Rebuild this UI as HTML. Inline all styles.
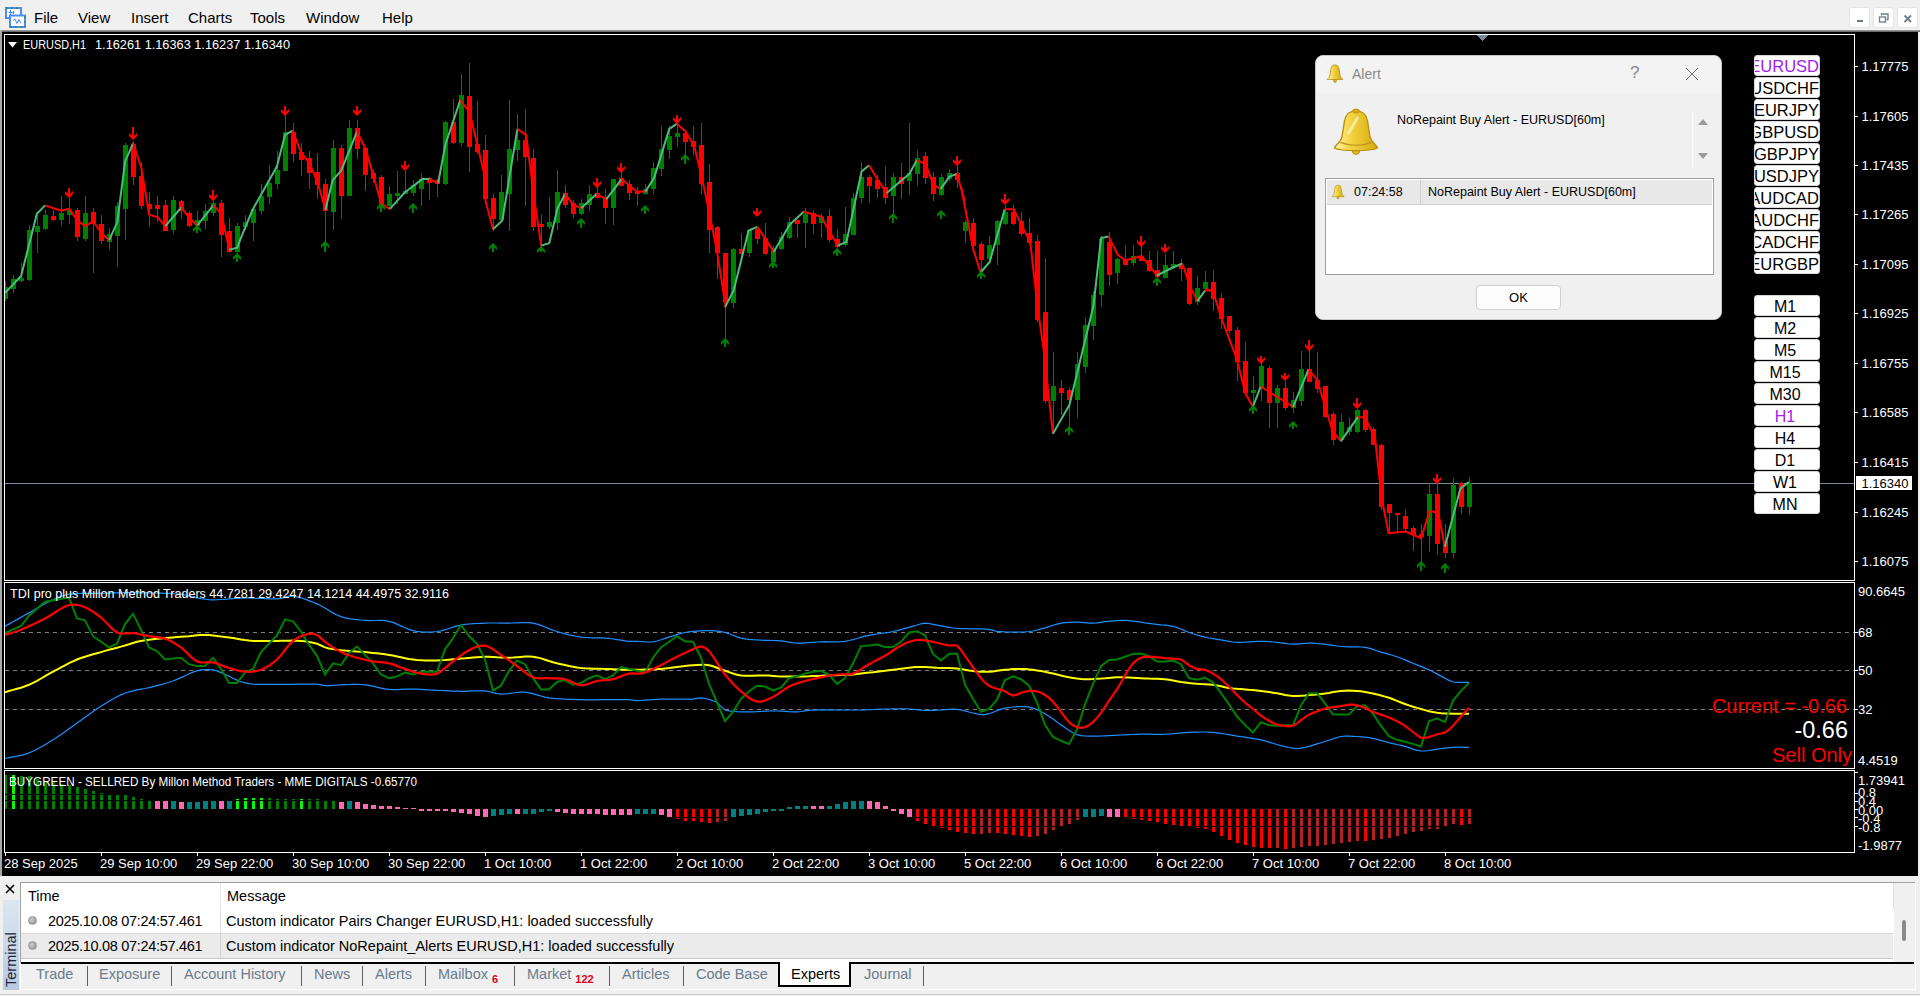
<!DOCTYPE html>
<html><head><meta charset="utf-8">
<style>
*{margin:0;padding:0;box-sizing:border-box}
html,body{width:1920px;height:996px;overflow:hidden;background:#f0f0f0;font-family:"Liberation Sans",sans-serif}
.abs{position:absolute}
#menubar{position:absolute;left:0;top:0;width:1920px;height:30px;background:#f0f0f0}
.mi{position:absolute;top:9px;font-size:15px;color:#000}
#shade{position:absolute;left:0;top:30px;width:1920px;height:2px;background:linear-gradient(#a8a8a8,#5a5a5a)}
#leftshade{position:absolute;left:0;top:30px;width:2px;height:848px;background:#a8a8a8}
#chartbg{position:absolute;left:2px;top:32px;width:1916px;height:844px;background:#000}
svg.main{position:absolute;left:0;top:0}
svg text{font-family:"Liberation Sans",sans-serif;font-size:12px;fill:#fff}
svg text.ax{font-size:13px}
svg text.tl{letter-spacing:0px}
.wbtn{position:absolute;top:7px;width:21px;height:21px;background:#fff;border:1px solid #e6e6e6;border-radius:3px}
.pbtn{position:absolute;left:1754px;width:66px;height:21px;background:#fff;border:1px solid #d8d8d8;border-radius:3px;overflow:hidden;text-align:center;white-space:nowrap}
.pbtn span{position:absolute;right:0px;top:1px;font-size:16.5px;color:#000;line-height:19px}
.pbtn.tf span{right:auto;left:50%;transform:translateX(-50%);margin-left:-2px}
.pbtn.tf span{font-size:16px}
.pbtn.sel span{color:#a020f0}
#dlg{position:absolute;left:1315px;top:55px;width:407px;height:265px;background:#f0f0f0;border-radius:8px;overflow:hidden;border:1px solid #c8c8c8}
#dlgtitle{position:absolute;left:0;top:0;width:100%;height:37px;background:#f3f3f3}
#term{position:absolute;left:0;top:876px;width:1920px;height:120px;background:#f0f0f0}
.tab{position:absolute;top:966px;font-size:14.5px;color:#6b7a8c;height:20px}
.tab.act{color:#000}
.tsep{position:absolute;top:966px;width:1px;height:20px;background:#5f5f5f}
.badge{color:#e0001a;font-size:11px;font-weight:bold;margin-left:4px;position:relative;top:4px}
</style></head><body>
<div id="menubar">
 <svg class="abs" style="left:5px;top:7px" width="21" height="21" viewBox="0 0 21 21">
  <rect x="1" y="1" width="15" height="10" fill="#fff" stroke="#4a8cff" stroke-width="2"/>
  <path d="M1 1 H16" stroke="#3a8a70" stroke-width="2" stroke-dasharray="2,3"/>
  <rect x="5" y="8.5" width="15" height="11.5" fill="#fff" stroke="#4a8cff" stroke-width="2"/>
  <path d="M5 20 H20 M20 9 V20" stroke="#3a8a70" stroke-width="2" stroke-dasharray="2,3"/>
  <path d="M3.5 5.5 H8.5 M5.5 3 V8 M8.5 4 V7" stroke="#4a8cff" stroke-width="1"/>
  <path d="M8 13.5 L10 12 L12 16.5 L14 12.5 L16 16.5" stroke="#4a8cff" stroke-width="1" fill="none"/>
 </svg>
 <div class="mi" style="left:34px">File</div>
 <div class="mi" style="left:78px">View</div>
 <div class="mi" style="left:131px">Insert</div>
 <div class="mi" style="left:188px">Charts</div>
 <div class="mi" style="left:250px">Tools</div>
 <div class="mi" style="left:306px">Window</div>
 <div class="mi" style="left:382px">Help</div>
 <div class="wbtn" style="left:1849px"><div class="abs" style="left:7px;top:12px;width:6px;height:2px;background:#6b7b8c"></div></div>
 <div class="wbtn" style="left:1873px"><svg class="abs" style="left:4px;top:4px" width="12" height="12"><rect x="1.5" y="5" width="6" height="5" fill="none" stroke="#6b7b8c" stroke-width="1.3"/><path d="M3.5 3.5 V2 H10 V7.5 H8.5" fill="none" stroke="#6b7b8c" stroke-width="1.3"/></svg></div>
 <div class="wbtn" style="left:1897px"><svg class="abs" style="left:5px;top:6px" width="10" height="10"><path d="M1.5 1.5 L8 8 M8 1.5 L1.5 8" stroke="#6b7b8c" stroke-width="1.8"/></svg></div>
</div>
<div id="shade"></div>
<div id="leftshade"></div>
<div id="chartbg"></div>
<svg class="main" width="1920" height="996" shape-rendering="crispEdges">
<defs>
 <clipPath id="clipMain"><rect x="5" y="35" width="1849" height="545"/></clipPath>
 <clipPath id="clipTDI"><rect x="5" y="583" width="1849" height="185"/></clipPath>
 <clipPath id="clipHist"><rect x="5" y="771" width="1849" height="81"/></clipPath>
</defs>
<!-- frames -->
<rect x="4.5" y="34.5" width="1850" height="546" fill="none" stroke="#fff" stroke-width="1"/>
<rect x="4.5" y="582.5" width="1850" height="186" fill="none" stroke="#fff" stroke-width="1"/>
<rect x="4.5" y="770.5" width="1850" height="82" fill="none" stroke="#fff" stroke-width="1"/>
<path d="M1476 35 L1489 35 L1482.5 41 Z" fill="#778899"/>
<g shape-rendering="auto">
<g clip-path="url(#clipMain)">
<rect x="5" y="483" width="1849" height="1" fill="#778899"/>
<rect x="5" y="281" width="1" height="20" fill="#008000"/>
<rect x="3" y="287" width="5" height="12" fill="#008000"/>
<rect x="13" y="275" width="1" height="18" fill="#008000"/>
<rect x="11" y="279" width="5" height="10" fill="#008000"/>
<rect x="21" y="263" width="1" height="19" fill="#008000"/>
<rect x="19" y="278" width="5" height="3" fill="#008000"/>
<rect x="29" y="225" width="1" height="56" fill="#008000"/>
<rect x="27" y="230" width="5" height="50" fill="#008000"/>
<rect x="37" y="215" width="1" height="38" fill="#008000"/>
<rect x="35" y="226" width="5" height="6" fill="#008000"/>
<rect x="45" y="210" width="1" height="20" fill="#008000"/>
<rect x="43" y="215" width="5" height="14" fill="#008000"/>
<rect x="53" y="210" width="1" height="11" fill="#ff0000"/>
<rect x="51" y="216" width="5" height="4" fill="#ff0000"/>
<rect x="61" y="196" width="1" height="30" fill="#008000"/>
<rect x="59" y="213" width="5" height="7" fill="#008000"/>
<rect x="69" y="197" width="1" height="27" fill="#008000"/>
<rect x="67" y="210" width="5" height="5" fill="#008000"/>
<rect x="77" y="208" width="1" height="33" fill="#ff0000"/>
<rect x="75" y="210" width="5" height="27" fill="#ff0000"/>
<rect x="85" y="196" width="1" height="45" fill="#008000"/>
<rect x="83" y="213" width="5" height="26" fill="#008000"/>
<rect x="93" y="208" width="1" height="65" fill="#ff0000"/>
<rect x="91" y="212" width="5" height="12" fill="#ff0000"/>
<rect x="101" y="215" width="1" height="29" fill="#ff0000"/>
<rect x="99" y="224" width="5" height="17" fill="#ff0000"/>
<rect x="109" y="228" width="1" height="22" fill="#008000"/>
<rect x="107" y="234" width="5" height="8" fill="#008000"/>
<rect x="117" y="202" width="1" height="65" fill="#008000"/>
<rect x="115" y="206" width="5" height="30" fill="#008000"/>
<rect x="125" y="143" width="1" height="97" fill="#008000"/>
<rect x="123" y="145" width="5" height="64" fill="#008000"/>
<rect x="133" y="141" width="1" height="44" fill="#ff0000"/>
<rect x="131" y="144" width="5" height="33" fill="#ff0000"/>
<rect x="141" y="162" width="1" height="47" fill="#ff0000"/>
<rect x="139" y="176" width="5" height="30" fill="#ff0000"/>
<rect x="149" y="192" width="1" height="35" fill="#ff0000"/>
<rect x="147" y="204" width="5" height="5" fill="#ff0000"/>
<rect x="157" y="196" width="1" height="26" fill="#ff0000"/>
<rect x="155" y="205" width="5" height="4" fill="#ff0000"/>
<rect x="165" y="200" width="1" height="31" fill="#ff0000"/>
<rect x="163" y="205" width="5" height="26" fill="#ff0000"/>
<rect x="173" y="196" width="1" height="38" fill="#008000"/>
<rect x="171" y="200" width="5" height="30" fill="#008000"/>
<rect x="181" y="200" width="1" height="19" fill="#ff0000"/>
<rect x="179" y="201" width="5" height="10" fill="#ff0000"/>
<rect x="189" y="211" width="1" height="16" fill="#ff0000"/>
<rect x="187" y="213" width="5" height="13" fill="#ff0000"/>
<rect x="197" y="211" width="1" height="19" fill="#008000"/>
<rect x="195" y="220" width="5" height="6" fill="#008000"/>
<rect x="205" y="204" width="1" height="25" fill="#008000"/>
<rect x="203" y="211" width="5" height="10" fill="#008000"/>
<rect x="213" y="199" width="1" height="17" fill="#008000"/>
<rect x="211" y="203" width="5" height="10" fill="#008000"/>
<rect x="221" y="200" width="1" height="57" fill="#ff0000"/>
<rect x="219" y="203" width="5" height="32" fill="#ff0000"/>
<rect x="229" y="218" width="1" height="35" fill="#ff0000"/>
<rect x="227" y="231" width="5" height="21" fill="#ff0000"/>
<rect x="237" y="223" width="1" height="30" fill="#008000"/>
<rect x="235" y="226" width="5" height="26" fill="#008000"/>
<rect x="245" y="215" width="1" height="15" fill="#008000"/>
<rect x="243" y="222" width="5" height="5" fill="#008000"/>
<rect x="253" y="208" width="1" height="33" fill="#008000"/>
<rect x="251" y="209" width="5" height="14" fill="#008000"/>
<rect x="261" y="184" width="1" height="30" fill="#008000"/>
<rect x="259" y="196" width="5" height="15" fill="#008000"/>
<rect x="269" y="165" width="1" height="39" fill="#008000"/>
<rect x="267" y="183" width="5" height="14" fill="#008000"/>
<rect x="277" y="151" width="1" height="38" fill="#008000"/>
<rect x="275" y="170" width="5" height="14" fill="#008000"/>
<rect x="285" y="115" width="1" height="56" fill="#008000"/>
<rect x="283" y="132" width="5" height="39" fill="#008000"/>
<rect x="293" y="123" width="1" height="39" fill="#ff0000"/>
<rect x="291" y="132" width="5" height="22" fill="#ff0000"/>
<rect x="301" y="143" width="1" height="33" fill="#ff0000"/>
<rect x="299" y="152" width="5" height="8" fill="#ff0000"/>
<rect x="309" y="151" width="1" height="38" fill="#ff0000"/>
<rect x="307" y="158" width="5" height="15" fill="#ff0000"/>
<rect x="317" y="153" width="1" height="46" fill="#ff0000"/>
<rect x="315" y="172" width="5" height="13" fill="#ff0000"/>
<rect x="325" y="179" width="1" height="64" fill="#ff0000"/>
<rect x="323" y="184" width="5" height="27" fill="#ff0000"/>
<rect x="333" y="140" width="1" height="90" fill="#008000"/>
<rect x="331" y="148" width="5" height="64" fill="#008000"/>
<rect x="341" y="145" width="1" height="74" fill="#ff0000"/>
<rect x="339" y="148" width="5" height="48" fill="#ff0000"/>
<rect x="349" y="120" width="1" height="76" fill="#008000"/>
<rect x="347" y="128" width="5" height="68" fill="#008000"/>
<rect x="357" y="120" width="1" height="39" fill="#ff0000"/>
<rect x="355" y="128" width="5" height="21" fill="#ff0000"/>
<rect x="365" y="148" width="1" height="43" fill="#ff0000"/>
<rect x="363" y="148" width="5" height="27" fill="#ff0000"/>
<rect x="373" y="170" width="1" height="13" fill="#ff0000"/>
<rect x="371" y="173" width="5" height="6" fill="#ff0000"/>
<rect x="381" y="175" width="1" height="31" fill="#ff0000"/>
<rect x="379" y="177" width="5" height="29" fill="#ff0000"/>
<rect x="389" y="186" width="1" height="23" fill="#008000"/>
<rect x="387" y="194" width="5" height="12" fill="#008000"/>
<rect x="397" y="171" width="1" height="33" fill="#008000"/>
<rect x="395" y="193" width="5" height="3" fill="#008000"/>
<rect x="405" y="171" width="1" height="23" fill="#008000"/>
<rect x="403" y="191" width="5" height="3" fill="#008000"/>
<rect x="413" y="180" width="1" height="16" fill="#008000"/>
<rect x="411" y="185" width="5" height="8" fill="#008000"/>
<rect x="421" y="173" width="1" height="33" fill="#008000"/>
<rect x="419" y="179" width="5" height="10" fill="#008000"/>
<rect x="429" y="177" width="1" height="23" fill="#ff0000"/>
<rect x="427" y="178" width="5" height="5" fill="#ff0000"/>
<rect x="437" y="179" width="1" height="18" fill="#ff0000"/>
<rect x="435" y="180" width="5" height="4" fill="#ff0000"/>
<rect x="445" y="121" width="1" height="64" fill="#008000"/>
<rect x="443" y="122" width="5" height="62" fill="#008000"/>
<rect x="453" y="99" width="1" height="45" fill="#ff0000"/>
<rect x="451" y="122" width="5" height="21" fill="#ff0000"/>
<rect x="461" y="74" width="1" height="72" fill="#008000"/>
<rect x="459" y="95" width="5" height="48" fill="#008000"/>
<rect x="469" y="63" width="1" height="109" fill="#ff0000"/>
<rect x="467" y="96" width="5" height="51" fill="#ff0000"/>
<rect x="477" y="101" width="1" height="53" fill="#ff0000"/>
<rect x="475" y="144" width="5" height="8" fill="#ff0000"/>
<rect x="485" y="135" width="1" height="69" fill="#ff0000"/>
<rect x="483" y="150" width="5" height="49" fill="#ff0000"/>
<rect x="493" y="194" width="1" height="37" fill="#ff0000"/>
<rect x="491" y="198" width="5" height="21" fill="#ff0000"/>
<rect x="501" y="175" width="1" height="46" fill="#008000"/>
<rect x="499" y="192" width="5" height="28" fill="#008000"/>
<rect x="509" y="100" width="1" height="131" fill="#008000"/>
<rect x="507" y="149" width="5" height="45" fill="#008000"/>
<rect x="517" y="114" width="1" height="47" fill="#008000"/>
<rect x="515" y="140" width="5" height="10" fill="#008000"/>
<rect x="525" y="109" width="1" height="97" fill="#ff0000"/>
<rect x="523" y="140" width="5" height="17" fill="#ff0000"/>
<rect x="533" y="149" width="1" height="82" fill="#ff0000"/>
<rect x="531" y="158" width="5" height="69" fill="#ff0000"/>
<rect x="541" y="214" width="1" height="34" fill="#ff0000"/>
<rect x="539" y="224" width="5" height="3" fill="#ff0000"/>
<rect x="549" y="197" width="1" height="32" fill="#008000"/>
<rect x="547" y="222" width="5" height="5" fill="#008000"/>
<rect x="557" y="170" width="1" height="60" fill="#008000"/>
<rect x="555" y="192" width="5" height="31" fill="#008000"/>
<rect x="565" y="185" width="1" height="23" fill="#ff0000"/>
<rect x="563" y="193" width="5" height="12" fill="#ff0000"/>
<rect x="573" y="200" width="1" height="18" fill="#ff0000"/>
<rect x="571" y="203" width="5" height="11" fill="#ff0000"/>
<rect x="581" y="199" width="1" height="16" fill="#008000"/>
<rect x="579" y="203" width="5" height="11" fill="#008000"/>
<rect x="589" y="185" width="1" height="26" fill="#008000"/>
<rect x="587" y="194" width="5" height="11" fill="#008000"/>
<rect x="597" y="183" width="1" height="15" fill="#ff0000"/>
<rect x="595" y="193" width="5" height="5" fill="#ff0000"/>
<rect x="605" y="189" width="1" height="35" fill="#ff0000"/>
<rect x="603" y="197" width="5" height="11" fill="#ff0000"/>
<rect x="613" y="179" width="1" height="46" fill="#008000"/>
<rect x="611" y="179" width="5" height="29" fill="#008000"/>
<rect x="621" y="170" width="1" height="16" fill="#ff0000"/>
<rect x="619" y="178" width="5" height="8" fill="#ff0000"/>
<rect x="629" y="180" width="1" height="20" fill="#ff0000"/>
<rect x="627" y="184" width="5" height="9" fill="#ff0000"/>
<rect x="637" y="187" width="1" height="19" fill="#ff0000"/>
<rect x="635" y="192" width="5" height="2" fill="#ff0000"/>
<rect x="645" y="184" width="1" height="10" fill="#008000"/>
<rect x="643" y="189" width="5" height="5" fill="#008000"/>
<rect x="653" y="162" width="1" height="32" fill="#008000"/>
<rect x="651" y="168" width="5" height="21" fill="#008000"/>
<rect x="661" y="126" width="1" height="50" fill="#008000"/>
<rect x="659" y="149" width="5" height="20" fill="#008000"/>
<rect x="669" y="126" width="1" height="33" fill="#008000"/>
<rect x="667" y="136" width="5" height="14" fill="#008000"/>
<rect x="677" y="124" width="1" height="23" fill="#008000"/>
<rect x="675" y="133" width="5" height="4" fill="#008000"/>
<rect x="685" y="130" width="1" height="25" fill="#ff0000"/>
<rect x="683" y="133" width="5" height="9" fill="#ff0000"/>
<rect x="693" y="126" width="1" height="29" fill="#ff0000"/>
<rect x="691" y="141" width="5" height="6" fill="#ff0000"/>
<rect x="701" y="123" width="1" height="71" fill="#ff0000"/>
<rect x="699" y="145" width="5" height="39" fill="#ff0000"/>
<rect x="709" y="164" width="1" height="89" fill="#ff0000"/>
<rect x="707" y="182" width="5" height="48" fill="#ff0000"/>
<rect x="717" y="226" width="1" height="53" fill="#ff0000"/>
<rect x="715" y="227" width="5" height="26" fill="#ff0000"/>
<rect x="725" y="253" width="1" height="89" fill="#ff0000"/>
<rect x="723" y="253" width="5" height="49" fill="#ff0000"/>
<rect x="733" y="248" width="1" height="60" fill="#008000"/>
<rect x="731" y="249" width="5" height="54" fill="#008000"/>
<rect x="741" y="233" width="1" height="22" fill="#ff0000"/>
<rect x="739" y="249" width="5" height="5" fill="#ff0000"/>
<rect x="749" y="229" width="1" height="28" fill="#008000"/>
<rect x="747" y="230" width="5" height="23" fill="#008000"/>
<rect x="757" y="227" width="1" height="17" fill="#ff0000"/>
<rect x="755" y="229" width="5" height="10" fill="#ff0000"/>
<rect x="765" y="223" width="1" height="32" fill="#ff0000"/>
<rect x="763" y="238" width="5" height="16" fill="#ff0000"/>
<rect x="773" y="246" width="1" height="17" fill="#008000"/>
<rect x="771" y="248" width="5" height="14" fill="#008000"/>
<rect x="781" y="232" width="1" height="18" fill="#008000"/>
<rect x="779" y="237" width="5" height="12" fill="#008000"/>
<rect x="789" y="217" width="1" height="22" fill="#008000"/>
<rect x="787" y="222" width="5" height="16" fill="#008000"/>
<rect x="797" y="220" width="1" height="18" fill="#ff0000"/>
<rect x="795" y="220" width="5" height="4" fill="#ff0000"/>
<rect x="805" y="208" width="1" height="40" fill="#008000"/>
<rect x="803" y="214" width="5" height="9" fill="#008000"/>
<rect x="813" y="210" width="1" height="24" fill="#ff0000"/>
<rect x="811" y="213" width="5" height="11" fill="#ff0000"/>
<rect x="821" y="214" width="1" height="24" fill="#008000"/>
<rect x="819" y="217" width="5" height="6" fill="#008000"/>
<rect x="829" y="209" width="1" height="33" fill="#ff0000"/>
<rect x="827" y="216" width="5" height="24" fill="#ff0000"/>
<rect x="837" y="229" width="1" height="20" fill="#ff0000"/>
<rect x="835" y="239" width="5" height="8" fill="#ff0000"/>
<rect x="845" y="207" width="1" height="40" fill="#008000"/>
<rect x="843" y="234" width="5" height="11" fill="#008000"/>
<rect x="853" y="193" width="1" height="42" fill="#008000"/>
<rect x="851" y="198" width="5" height="37" fill="#008000"/>
<rect x="861" y="162" width="1" height="41" fill="#008000"/>
<rect x="859" y="177" width="5" height="21" fill="#008000"/>
<rect x="869" y="175" width="1" height="28" fill="#ff0000"/>
<rect x="867" y="177" width="5" height="9" fill="#ff0000"/>
<rect x="877" y="175" width="1" height="23" fill="#ff0000"/>
<rect x="875" y="180" width="5" height="9" fill="#ff0000"/>
<rect x="885" y="166" width="1" height="38" fill="#ff0000"/>
<rect x="883" y="187" width="5" height="11" fill="#ff0000"/>
<rect x="893" y="173" width="1" height="45" fill="#008000"/>
<rect x="891" y="177" width="5" height="19" fill="#008000"/>
<rect x="901" y="163" width="1" height="36" fill="#ff0000"/>
<rect x="899" y="177" width="5" height="7" fill="#ff0000"/>
<rect x="909" y="123" width="1" height="72" fill="#008000"/>
<rect x="907" y="173" width="5" height="8" fill="#008000"/>
<rect x="917" y="150" width="1" height="36" fill="#008000"/>
<rect x="915" y="158" width="5" height="16" fill="#008000"/>
<rect x="925" y="152" width="1" height="32" fill="#ff0000"/>
<rect x="923" y="156" width="5" height="22" fill="#ff0000"/>
<rect x="933" y="172" width="1" height="29" fill="#ff0000"/>
<rect x="931" y="177" width="5" height="17" fill="#ff0000"/>
<rect x="941" y="174" width="1" height="22" fill="#008000"/>
<rect x="939" y="177" width="5" height="18" fill="#008000"/>
<rect x="949" y="169" width="1" height="12" fill="#008000"/>
<rect x="947" y="173" width="5" height="6" fill="#008000"/>
<rect x="957" y="165" width="1" height="23" fill="#ff0000"/>
<rect x="955" y="173" width="5" height="7" fill="#ff0000"/>
<rect x="965" y="220" width="1" height="23" fill="#008000"/>
<rect x="963" y="222" width="5" height="9" fill="#008000"/>
<rect x="973" y="218" width="1" height="30" fill="#ff0000"/>
<rect x="971" y="223" width="5" height="23" fill="#ff0000"/>
<rect x="981" y="242" width="1" height="31" fill="#ff0000"/>
<rect x="979" y="244" width="5" height="16" fill="#ff0000"/>
<rect x="989" y="236" width="1" height="24" fill="#008000"/>
<rect x="987" y="245" width="5" height="14" fill="#008000"/>
<rect x="997" y="220" width="1" height="45" fill="#008000"/>
<rect x="995" y="221" width="5" height="24" fill="#008000"/>
<rect x="1005" y="205" width="1" height="20" fill="#008000"/>
<rect x="1003" y="212" width="5" height="12" fill="#008000"/>
<rect x="1013" y="205" width="1" height="20" fill="#ff0000"/>
<rect x="1011" y="212" width="5" height="12" fill="#ff0000"/>
<rect x="1021" y="212" width="1" height="24" fill="#ff0000"/>
<rect x="1019" y="221" width="5" height="13" fill="#ff0000"/>
<rect x="1029" y="218" width="1" height="27" fill="#ff0000"/>
<rect x="1027" y="233" width="5" height="10" fill="#ff0000"/>
<rect x="1037" y="235" width="1" height="87" fill="#ff0000"/>
<rect x="1035" y="241" width="5" height="79" fill="#ff0000"/>
<rect x="1045" y="258" width="1" height="145" fill="#ff0000"/>
<rect x="1043" y="312" width="5" height="89" fill="#ff0000"/>
<rect x="1053" y="352" width="1" height="78" fill="#008000"/>
<rect x="1051" y="386" width="5" height="15" fill="#008000"/>
<rect x="1061" y="380" width="1" height="35" fill="#ff0000"/>
<rect x="1059" y="388" width="5" height="5" fill="#ff0000"/>
<rect x="1069" y="388" width="1" height="42" fill="#ff0000"/>
<rect x="1067" y="390" width="5" height="10" fill="#ff0000"/>
<rect x="1077" y="352" width="1" height="66" fill="#008000"/>
<rect x="1075" y="364" width="5" height="36" fill="#008000"/>
<rect x="1085" y="318" width="1" height="55" fill="#008000"/>
<rect x="1083" y="325" width="5" height="42" fill="#008000"/>
<rect x="1093" y="291" width="1" height="49" fill="#008000"/>
<rect x="1091" y="295" width="5" height="31" fill="#008000"/>
<rect x="1101" y="236" width="1" height="71" fill="#008000"/>
<rect x="1099" y="239" width="5" height="56" fill="#008000"/>
<rect x="1109" y="232" width="1" height="54" fill="#ff0000"/>
<rect x="1107" y="242" width="5" height="33" fill="#ff0000"/>
<rect x="1117" y="258" width="1" height="26" fill="#008000"/>
<rect x="1115" y="259" width="5" height="14" fill="#008000"/>
<rect x="1125" y="245" width="1" height="20" fill="#ff0000"/>
<rect x="1123" y="259" width="5" height="6" fill="#ff0000"/>
<rect x="1133" y="245" width="1" height="21" fill="#008000"/>
<rect x="1131" y="256" width="5" height="7" fill="#008000"/>
<rect x="1141" y="245" width="1" height="16" fill="#ff0000"/>
<rect x="1139" y="256" width="5" height="5" fill="#ff0000"/>
<rect x="1149" y="251" width="1" height="21" fill="#ff0000"/>
<rect x="1147" y="260" width="5" height="11" fill="#ff0000"/>
<rect x="1157" y="251" width="1" height="29" fill="#ff0000"/>
<rect x="1155" y="270" width="5" height="7" fill="#ff0000"/>
<rect x="1165" y="254" width="1" height="24" fill="#008000"/>
<rect x="1163" y="265" width="5" height="13" fill="#008000"/>
<rect x="1173" y="251" width="1" height="18" fill="#008000"/>
<rect x="1171" y="264" width="5" height="3" fill="#008000"/>
<rect x="1181" y="259" width="1" height="22" fill="#ff0000"/>
<rect x="1179" y="265" width="5" height="4" fill="#ff0000"/>
<rect x="1189" y="268" width="1" height="37" fill="#ff0000"/>
<rect x="1187" y="268" width="5" height="36" fill="#ff0000"/>
<rect x="1197" y="276" width="1" height="29" fill="#008000"/>
<rect x="1195" y="288" width="5" height="14" fill="#008000"/>
<rect x="1205" y="271" width="1" height="19" fill="#008000"/>
<rect x="1203" y="282" width="5" height="7" fill="#008000"/>
<rect x="1213" y="270" width="1" height="41" fill="#ff0000"/>
<rect x="1211" y="282" width="5" height="17" fill="#ff0000"/>
<rect x="1221" y="293" width="1" height="36" fill="#ff0000"/>
<rect x="1219" y="298" width="5" height="21" fill="#ff0000"/>
<rect x="1229" y="316" width="1" height="17" fill="#ff0000"/>
<rect x="1227" y="316" width="5" height="15" fill="#ff0000"/>
<rect x="1237" y="327" width="1" height="54" fill="#ff0000"/>
<rect x="1235" y="330" width="5" height="32" fill="#ff0000"/>
<rect x="1245" y="342" width="1" height="52" fill="#ff0000"/>
<rect x="1243" y="361" width="5" height="32" fill="#ff0000"/>
<rect x="1253" y="376" width="1" height="35" fill="#008000"/>
<rect x="1251" y="390" width="5" height="3" fill="#008000"/>
<rect x="1261" y="363" width="1" height="38" fill="#008000"/>
<rect x="1259" y="366" width="5" height="23" fill="#008000"/>
<rect x="1269" y="366" width="1" height="62" fill="#ff0000"/>
<rect x="1267" y="368" width="5" height="35" fill="#ff0000"/>
<rect x="1277" y="385" width="1" height="43" fill="#008000"/>
<rect x="1275" y="388" width="5" height="15" fill="#008000"/>
<rect x="1285" y="381" width="1" height="29" fill="#ff0000"/>
<rect x="1283" y="388" width="5" height="20" fill="#ff0000"/>
<rect x="1293" y="392" width="1" height="21" fill="#008000"/>
<rect x="1291" y="400" width="5" height="8" fill="#008000"/>
<rect x="1301" y="351" width="1" height="55" fill="#008000"/>
<rect x="1299" y="369" width="5" height="32" fill="#008000"/>
<rect x="1309" y="349" width="1" height="33" fill="#ff0000"/>
<rect x="1307" y="369" width="5" height="13" fill="#ff0000"/>
<rect x="1317" y="352" width="1" height="41" fill="#ff0000"/>
<rect x="1315" y="380" width="5" height="9" fill="#ff0000"/>
<rect x="1325" y="386" width="1" height="32" fill="#ff0000"/>
<rect x="1323" y="386" width="5" height="31" fill="#ff0000"/>
<rect x="1333" y="412" width="1" height="33" fill="#ff0000"/>
<rect x="1331" y="414" width="5" height="26" fill="#ff0000"/>
<rect x="1341" y="414" width="1" height="28" fill="#008000"/>
<rect x="1339" y="422" width="5" height="18" fill="#008000"/>
<rect x="1349" y="417" width="1" height="18" fill="#008000"/>
<rect x="1347" y="427" width="5" height="5" fill="#008000"/>
<rect x="1357" y="409" width="1" height="24" fill="#008000"/>
<rect x="1355" y="410" width="5" height="22" fill="#008000"/>
<rect x="1365" y="409" width="1" height="23" fill="#ff0000"/>
<rect x="1363" y="410" width="5" height="20" fill="#ff0000"/>
<rect x="1373" y="427" width="1" height="18" fill="#ff0000"/>
<rect x="1371" y="429" width="5" height="16" fill="#ff0000"/>
<rect x="1381" y="444" width="1" height="66" fill="#ff0000"/>
<rect x="1379" y="445" width="5" height="62" fill="#ff0000"/>
<rect x="1389" y="504" width="1" height="28" fill="#ff0000"/>
<rect x="1387" y="504" width="5" height="9" fill="#ff0000"/>
<rect x="1397" y="513" width="1" height="20" fill="#ff0000"/>
<rect x="1395" y="513" width="5" height="2" fill="#ff0000"/>
<rect x="1405" y="509" width="1" height="24" fill="#ff0000"/>
<rect x="1403" y="516" width="5" height="13" fill="#ff0000"/>
<rect x="1413" y="526" width="1" height="25" fill="#ff0000"/>
<rect x="1411" y="528" width="5" height="7" fill="#ff0000"/>
<rect x="1421" y="524" width="1" height="39" fill="#ff0000"/>
<rect x="1419" y="534" width="5" height="3" fill="#ff0000"/>
<rect x="1429" y="483" width="1" height="69" fill="#008000"/>
<rect x="1427" y="494" width="5" height="42" fill="#008000"/>
<rect x="1437" y="483" width="1" height="72" fill="#ff0000"/>
<rect x="1435" y="494" width="5" height="50" fill="#ff0000"/>
<rect x="1445" y="524" width="1" height="34" fill="#ff0000"/>
<rect x="1443" y="541" width="5" height="12" fill="#ff0000"/>
<rect x="1453" y="478" width="1" height="80" fill="#008000"/>
<rect x="1451" y="485" width="5" height="68" fill="#008000"/>
<rect x="1461" y="482" width="1" height="32" fill="#ff0000"/>
<rect x="1459" y="483" width="5" height="24" fill="#ff0000"/>
<rect x="1469" y="477" width="1" height="38" fill="#008000"/>
<rect x="1467" y="483" width="5" height="24" fill="#008000"/>
<polyline points="5.1,292.9 21.1,276 36.9,213.8 45.1,205.4" fill="none" stroke="#4cbb7f" stroke-width="2" stroke-linejoin="round"/>
<polyline points="45.1,205.4 61.1,210.7 69.1,208.6 77.2,220.2 85.2,226.1 93.2,221.2 101.2,232.8 109.2,240.2" fill="none" stroke="#ff0000" stroke-width="2" stroke-linejoin="round"/>
<polyline points="109.2,240.2 117.2,222.3 125.2,161.1 133.2,143.2" fill="none" stroke="#4cbb7f" stroke-width="2" stroke-linejoin="round"/>
<polyline points="133.2,143.2 141.2,167.5 149.2,214.9 157.3,217 165.3,226.1" fill="none" stroke="#ff0000" stroke-width="2" stroke-linejoin="round"/>
<polyline points="165.3,226.1 181.3,207.5" fill="none" stroke="#4cbb7f" stroke-width="2" stroke-linejoin="round"/>
<polyline points="181.3,207.5 189.3,218 197.3,225.4" fill="none" stroke="#ff0000" stroke-width="2" stroke-linejoin="round"/>
<polyline points="197.3,225.4 213.3,205.4" fill="none" stroke="#4cbb7f" stroke-width="2" stroke-linejoin="round"/>
<polyline points="213.3,205.4 221.3,213.8 229.3,249.7" fill="none" stroke="#ff0000" stroke-width="2" stroke-linejoin="round"/>
<polyline points="229.3,249.7 237.4,247.6 240,240.2 252.6,209.7 276.9,166.5 285.1,134.8 292.7,130.6" fill="none" stroke="#4cbb7f" stroke-width="2" stroke-linejoin="round"/>
<polyline points="292.7,130.6 301.1,152.7 309.6,163.3 317.6,182.3 325.4,209.7" fill="none" stroke="#ff0000" stroke-width="2" stroke-linejoin="round"/>
<polyline points="325.4,209.7 332.7,180.2 341.2,170.7 357,131.7" fill="none" stroke="#4cbb7f" stroke-width="2" stroke-linejoin="round"/>
<polyline points="357,131.7 365.4,148.5 373.2,174.9 381.2,203.3 389.7,209.2" fill="none" stroke="#ff0000" stroke-width="2" stroke-linejoin="round"/>
<polyline points="389.7,209.2 404.4,192.8 422.3,179.1 429.7,179.1" fill="none" stroke="#4cbb7f" stroke-width="2" stroke-linejoin="round"/>
<polyline points="429.7,179.1 438.1,183.3" fill="none" stroke="#ff0000" stroke-width="2" stroke-linejoin="round"/>
<polyline points="438.1,183.3 445.5,144.3 460.3,100.1" fill="none" stroke="#4cbb7f" stroke-width="2" stroke-linejoin="round"/>
<polyline points="460.3,100.1 469.8,112.7 478.2,148.5 484.5,174.9 484.8,197.9 493,229.3" fill="none" stroke="#ff0000" stroke-width="2" stroke-linejoin="round"/>
<polyline points="493,229.3 502.3,220.5 517.4,128.9" fill="none" stroke="#4cbb7f" stroke-width="2" stroke-linejoin="round"/>
<polyline points="517.4,128.9 526.2,135.1 533.7,195.4 541.2,245.6" fill="none" stroke="#ff0000" stroke-width="2" stroke-linejoin="round"/>
<polyline points="541.2,245.6 549.3,243.1 557.6,207.9 565.1,194.1" fill="none" stroke="#4cbb7f" stroke-width="2" stroke-linejoin="round"/>
<polyline points="565.1,194.1 573.9,205.4 581.4,207.9" fill="none" stroke="#ff0000" stroke-width="2" stroke-linejoin="round"/>
<polyline points="581.4,207.9 596.5,194.1" fill="none" stroke="#4cbb7f" stroke-width="2" stroke-linejoin="round"/>
<polyline points="596.5,194.1 606.5,199.1" fill="none" stroke="#ff0000" stroke-width="2" stroke-linejoin="round"/>
<polyline points="606.5,199.1 621.6,179.1" fill="none" stroke="#4cbb7f" stroke-width="2" stroke-linejoin="round"/>
<polyline points="621.6,179.1 636.6,191.6 645.4,191.6" fill="none" stroke="#ff0000" stroke-width="2" stroke-linejoin="round"/>
<polyline points="645.4,191.6 654.2,177.8 669.3,128.9 676.8,123.8" fill="none" stroke="#4cbb7f" stroke-width="2" stroke-linejoin="round"/>
<polyline points="676.8,123.8 685.6,131.4 694.4,146.4 701.9,177.8 709.4,213 716.9,250.6 725.7,307.1" fill="none" stroke="#ff0000" stroke-width="2" stroke-linejoin="round"/>
<polyline points="725,307.1 733.6,290.8 748.6,230.5 757.4,226.8" fill="none" stroke="#4cbb7f" stroke-width="2" stroke-linejoin="round"/>
<polyline points="757.4,226.8 764.9,238.1 773.7,251.9" fill="none" stroke="#ff0000" stroke-width="2" stroke-linejoin="round"/>
<polyline points="773.7,251.9 790,224.2 803.8,211.7" fill="none" stroke="#4cbb7f" stroke-width="2" stroke-linejoin="round"/>
<polyline points="803.8,211.7 821.4,216.7 828.9,230.5 837.7,245.6" fill="none" stroke="#ff0000" stroke-width="2" stroke-linejoin="round"/>
<polyline points="837.7,245.6 846.5,241.8 861.6,171.5 869.1,165.3" fill="none" stroke="#4cbb7f" stroke-width="2" stroke-linejoin="round"/>
<polyline points="869.1,165.3 877.9,180.3 886.7,192.9" fill="none" stroke="#ff0000" stroke-width="2" stroke-linejoin="round"/>
<polyline points="886.7,192.9 901.7,180.3 909.3,174 916.8,160.2" fill="none" stroke="#4cbb7f" stroke-width="2" stroke-linejoin="round"/>
<polyline points="916.8,160.2 925.6,164 933.1,184.1 940.6,189.1" fill="none" stroke="#ff0000" stroke-width="2" stroke-linejoin="round"/>
<polyline points="940.6,189.1 949.4,176.6 956.9,174" fill="none" stroke="#4cbb7f" stroke-width="2" stroke-linejoin="round"/>
<polyline points="956.9,174 964.5,200.4 961,186.7 973,248.4 980.6,272.5" fill="none" stroke="#ff0000" stroke-width="2" stroke-linejoin="round"/>
<polyline points="980.6,272.5 989.6,262 1004.7,209.3" fill="none" stroke="#4cbb7f" stroke-width="2" stroke-linejoin="round"/>
<polyline points="1004.7,209.3 1013.7,209.3 1030.3,242.4 1037.8,308.7 1043.8,350.8 1052.9,433.7" fill="none" stroke="#ff0000" stroke-width="2" stroke-linejoin="round"/>
<polyline points="1052.9,433.7 1069.4,405.1 1093.5,305.7 1101.1,237.9 1108.6,236.4" fill="none" stroke="#4cbb7f" stroke-width="2" stroke-linejoin="round"/>
<polyline points="1108.6,236.4 1117.6,254.5 1125.2,260.5 1141.7,256 1156.8,275.5" fill="none" stroke="#ff0000" stroke-width="2" stroke-linejoin="round"/>
<polyline points="1156.8,275.5 1171.8,268 1182.4,263.5" fill="none" stroke="#4cbb7f" stroke-width="2" stroke-linejoin="round"/>
<polyline points="1182.4,263.5 1189.9,286.1 1197.4,301.1" fill="none" stroke="#ff0000" stroke-width="2" stroke-linejoin="round"/>
<polyline points="1197.4,301.1 1205,290.6" fill="none" stroke="#4cbb7f" stroke-width="2" stroke-linejoin="round"/>
<polyline points="1205,290.6 1211,290.6 1206.1,289.2 1212.9,290.9 1221.5,318.2 1236.8,359.2 1245.4,393.3 1252.9,406.9" fill="none" stroke="#ff0000" stroke-width="2" stroke-linejoin="round"/>
<polyline points="1252.9,406.9 1260.7,386.5" fill="none" stroke="#4cbb7f" stroke-width="2" stroke-linejoin="round"/>
<polyline points="1260.7,386.5 1293.1,406.9" fill="none" stroke="#ff0000" stroke-width="2" stroke-linejoin="round"/>
<polyline points="1293.1,406.9 1308.5,369.4" fill="none" stroke="#4cbb7f" stroke-width="2" stroke-linejoin="round"/>
<polyline points="1308.5,369.4 1317,379.6 1332.4,430.8 1340.9,441.1" fill="none" stroke="#ff0000" stroke-width="2" stroke-linejoin="round"/>
<polyline points="1340.9,441.1 1357.9,417.2" fill="none" stroke="#4cbb7f" stroke-width="2" stroke-linejoin="round"/>
<polyline points="1357.9,417.2 1364.8,417.2 1375,437.6 1381.8,499.1 1388.6,533.2 1405.7,531.5 1421.1,538.3 1429.6,511 1438.1,512.7 1444.9,546.8" fill="none" stroke="#ff0000" stroke-width="2" stroke-linejoin="round"/>
<polyline points="1444.9,546.8 1460.3,488.8 1468.8,482" fill="none" stroke="#4cbb7f" stroke-width="2" stroke-linejoin="round"/>
<rect x="68" y="188" width="2" height="8" fill="#ff0000"/>
<path d="M65 191 L69 194.8 L73 191 L73 194 L69 198 L65 194Z" fill="#ff0000"/>
<rect x="132" y="127" width="2" height="11" fill="#ff0000"/>
<path d="M129 133 L133 136.8 L137 133 L137 136 L133 140 L129 136Z" fill="#ff0000"/>
<rect x="212" y="190" width="2" height="9" fill="#ff0000"/>
<path d="M209 194 L213 197.8 L217 194 L217 197 L213 201 L209 197Z" fill="#ff0000"/>
<rect x="196" y="227" width="2" height="6" fill="#008000"/>
<path d="M193 232 L197 228.2 L201 232 L201 229 L197 225 L193 229Z" fill="#008000"/>
<rect x="236" y="255" width="2" height="7" fill="#008000"/>
<path d="M233 260 L237 256.2 L241 260 L241 257 L237 253 L233 257Z" fill="#008000"/>
<rect x="284" y="106" width="2" height="8" fill="#ff0000"/>
<path d="M281 109 L285 112.8 L289 109 L289 112 L285 116 L281 112Z" fill="#ff0000"/>
<rect x="324" y="243" width="2" height="9" fill="#008000"/>
<path d="M321 248 L325 244.2 L329 248 L329 245 L325 241 L321 245Z" fill="#008000"/>
<rect x="356" y="106" width="2" height="8" fill="#ff0000"/>
<path d="M353 109 L357 112.8 L361 109 L361 112 L357 116 L353 112Z" fill="#ff0000"/>
<rect x="380" y="205" width="2" height="7" fill="#008000"/>
<path d="M377 210 L381 206.2 L385 210 L385 207 L381 203 L377 207Z" fill="#008000"/>
<rect x="404" y="161" width="2" height="8" fill="#ff0000"/>
<path d="M401 164 L405 167.8 L409 164 L409 167 L405 171 L401 167Z" fill="#ff0000"/>
<rect x="412" y="205" width="2" height="8" fill="#008000"/>
<path d="M409 210 L413 206.2 L417 210 L417 207 L413 203 L409 207Z" fill="#008000"/>
<rect x="492" y="245" width="2" height="7" fill="#008000"/>
<path d="M489 250 L493 246.2 L497 250 L497 247 L493 243 L489 247Z" fill="#008000"/>
<rect x="540" y="248" width="2" height="4" fill="#008000"/>
<path d="M537 253 L541 249.2 L545 253 L545 250 L541 246 L537 250Z" fill="#008000"/>
<rect x="580" y="220" width="2" height="8" fill="#008000"/>
<path d="M577 225 L581 221.2 L585 225 L585 222 L581 218 L577 222Z" fill="#008000"/>
<rect x="596" y="178" width="2" height="8" fill="#ff0000"/>
<path d="M593 181 L597 184.8 L601 181 L601 184 L597 188 L593 184Z" fill="#ff0000"/>
<rect x="620" y="163" width="2" height="8" fill="#ff0000"/>
<path d="M617 166 L621 169.8 L625 166 L625 169 L621 173 L617 169Z" fill="#ff0000"/>
<rect x="644" y="207" width="2" height="7" fill="#008000"/>
<path d="M641 212 L645 208.2 L649 212 L649 209 L645 205 L641 209Z" fill="#008000"/>
<rect x="676" y="115" width="2" height="7" fill="#ff0000"/>
<path d="M673 117 L677 120.8 L681 117 L681 120 L677 124 L673 120Z" fill="#ff0000"/>
<rect x="684" y="156" width="2" height="8" fill="#008000"/>
<path d="M681 161 L685 157.2 L689 161 L689 158 L685 154 L681 158Z" fill="#008000"/>
<rect x="724" y="340" width="2" height="7" fill="#008000"/>
<path d="M721 345 L725 341.2 L729 345 L729 342 L725 338 L721 342Z" fill="#008000"/>
<rect x="756" y="208" width="2" height="7" fill="#ff0000"/>
<path d="M753 210 L757 213.8 L761 210 L761 213 L757 217 L753 213Z" fill="#ff0000"/>
<rect x="772" y="263" width="2" height="5" fill="#008000"/>
<path d="M769 268 L773 264.2 L777 268 L777 265 L773 261 L769 265Z" fill="#008000"/>
<rect x="836" y="250" width="2" height="6" fill="#008000"/>
<path d="M833 255 L837 251.2 L841 255 L841 252 L837 248 L833 252Z" fill="#008000"/>
<rect x="892" y="215" width="2" height="8" fill="#008000"/>
<path d="M889 220 L893 216.2 L897 220 L897 217 L893 213 L889 217Z" fill="#008000"/>
<rect x="940" y="212" width="2" height="7" fill="#008000"/>
<path d="M937 217 L941 213.2 L945 217 L945 214 L941 210 L937 214Z" fill="#008000"/>
<rect x="956" y="156" width="2" height="8" fill="#ff0000"/>
<path d="M953 159 L957 162.8 L961 159 L961 162 L957 166 L953 162Z" fill="#ff0000"/>
<rect x="980" y="273" width="2" height="6" fill="#008000"/>
<path d="M977 278 L981 274.2 L985 278 L985 275 L981 271 L977 275Z" fill="#008000"/>
<rect x="1004" y="194" width="2" height="9" fill="#ff0000"/>
<path d="M1001 198 L1005 201.8 L1009 198 L1009 201 L1005 205 L1001 201Z" fill="#ff0000"/>
<rect x="1068" y="428" width="2" height="7" fill="#008000"/>
<path d="M1065 433 L1069 429.2 L1073 433 L1073 430 L1069 426 L1065 430Z" fill="#008000"/>
<rect x="1140" y="236" width="2" height="9" fill="#ff0000"/>
<path d="M1137 240 L1141 243.8 L1145 240 L1145 243 L1141 247 L1137 243Z" fill="#ff0000"/>
<rect x="1156" y="279" width="2" height="7" fill="#008000"/>
<path d="M1153 284 L1157 280.2 L1161 284 L1161 281 L1157 277 L1153 281Z" fill="#008000"/>
<rect x="1164" y="244" width="2" height="7" fill="#ff0000"/>
<path d="M1161 246 L1165 249.8 L1169 246 L1169 249 L1165 253 L1161 249Z" fill="#ff0000"/>
<rect x="1252" y="407" width="2" height="7" fill="#008000"/>
<path d="M1249 412 L1253 408.2 L1257 412 L1257 409 L1253 405 L1249 409Z" fill="#008000"/>
<rect x="1260" y="356" width="2" height="6" fill="#ff0000"/>
<path d="M1257 357 L1261 360.8 L1265 357 L1265 360 L1261 364 L1257 360Z" fill="#ff0000"/>
<rect x="1284" y="373" width="2" height="6" fill="#ff0000"/>
<path d="M1281 374 L1285 377.8 L1289 374 L1289 377 L1285 381 L1281 377Z" fill="#ff0000"/>
<rect x="1292" y="423" width="2" height="6" fill="#008000"/>
<path d="M1289 428 L1293 424.2 L1297 428 L1297 425 L1293 421 L1289 425Z" fill="#008000"/>
<rect x="1308" y="340" width="2" height="9" fill="#ff0000"/>
<path d="M1305 344 L1309 347.8 L1313 344 L1313 347 L1309 351 L1305 347Z" fill="#ff0000"/>
<rect x="1356" y="398" width="2" height="9" fill="#ff0000"/>
<path d="M1353 402 L1357 405.8 L1361 402 L1361 405 L1357 409 L1353 405Z" fill="#ff0000"/>
<rect x="1420" y="563" width="2" height="8" fill="#008000"/>
<path d="M1417 568 L1421 564.2 L1425 568 L1425 565 L1421 561 L1417 565Z" fill="#008000"/>
<rect x="1436" y="474" width="2" height="8" fill="#ff0000"/>
<path d="M1433 477 L1437 480.8 L1441 477 L1441 480 L1437 484 L1433 480Z" fill="#ff0000"/>
<rect x="1444" y="565" width="2" height="8" fill="#008000"/>
<path d="M1441 570 L1445 566.2 L1449 570 L1449 567 L1445 563 L1441 567Z" fill="#008000"/>
</g>
<g clip-path="url(#clipTDI)">
<line x1="5" y1="632.5" x2="1854" y2="632.5" stroke="#808080" stroke-width="1" stroke-dasharray="4,4"/>
<line x1="5" y1="670.5" x2="1854" y2="670.5" stroke="#808080" stroke-width="1" stroke-dasharray="4,4"/>
<line x1="5" y1="709.5" x2="1854" y2="709.5" stroke="#808080" stroke-width="1" stroke-dasharray="4,4"/>
<polyline points="5.0,626.3 9.0,624.1 13.0,621.8 17.0,619.6 21.0,617.4 25.0,615.1 29.0,612.9 33.0,610.5 37.0,608.2 41.0,606.0 45.0,603.8 49.0,601.7 53.0,599.8 57.0,598.0 61.0,596.4 65.0,595.1 69.0,594.2 73.0,593.8 77.0,593.5 81.0,593.3 85.0,593.3 89.0,593.3 93.0,593.3 97.0,593.3 101.0,593.3 105.0,593.2 109.0,593.1 113.0,592.9 117.0,592.8 121.0,592.8 125.0,592.7 129.0,592.7 133.0,592.7 137.0,592.8 141.0,592.8 145.0,592.8 149.0,592.9 153.0,593.0 157.0,593.0 161.0,593.1 165.0,593.3 169.0,593.4 173.0,593.7 177.0,593.9 181.0,594.2 185.0,594.8 189.0,595.9 193.0,597.0 197.0,597.9 201.0,598.6 205.0,599.2 209.0,599.6 213.0,599.8 217.0,599.7 221.0,599.5 225.0,599.3 229.0,598.9 233.0,598.6 237.0,598.3 241.0,598.1 245.0,597.9 249.0,597.9 253.0,598.1 257.0,598.3 261.0,598.5 265.0,598.7 269.0,598.9 273.0,598.9 277.0,598.9 281.0,598.3 285.0,597.1 289.0,596.2 293.0,596.1 297.0,596.8 301.0,597.8 305.0,599.1 309.0,600.6 313.0,602.2 317.0,603.9 321.0,605.8 325.0,608.1 329.0,610.5 333.0,612.9 337.0,615.0 341.0,616.6 345.0,617.8 349.0,618.6 353.0,619.2 357.0,619.6 361.0,620.0 365.0,620.3 369.0,620.6 373.0,620.5 377.0,620.5 381.0,620.4 385.0,620.7 389.0,621.3 393.0,622.4 397.0,624.1 401.0,625.9 405.0,627.8 409.0,629.4 413.0,630.6 417.0,631.3 421.0,631.8 425.0,632.1 429.0,632.1 433.0,631.9 437.0,631.5 441.0,630.8 445.0,629.7 449.0,628.5 453.0,627.1 457.0,625.9 461.0,625.0 465.0,624.4 469.0,624.0 473.0,623.7 477.0,623.5 481.0,623.3 485.0,623.1 489.0,623.0 493.0,623.0 497.0,623.0 501.0,623.1 505.0,623.1 509.0,623.1 513.0,623.0 517.0,622.8 521.0,622.6 525.0,622.5 529.0,622.7 533.0,623.1 537.0,624.1 541.0,625.4 545.0,627.0 549.0,628.6 553.0,630.2 557.0,631.5 561.0,632.7 565.0,633.8 569.0,634.8 573.0,635.7 577.0,636.5 581.0,637.1 585.0,637.5 589.0,637.7 593.0,637.8 597.0,637.8 601.0,637.8 605.0,638.1 609.0,638.5 613.0,639.0 617.0,639.6 621.0,640.2 625.0,640.8 629.0,641.3 633.0,641.3 637.0,641.3 641.0,641.5 645.0,641.8 649.0,642.0 653.0,641.8 657.0,641.0 661.0,639.8 665.0,638.4 669.0,637.1 673.0,635.9 677.0,634.6 681.0,633.4 685.0,632.5 689.0,631.9 693.0,631.4 697.0,631.1 701.0,630.8 705.0,630.7 709.0,630.6 713.0,630.7 717.0,631.1 721.0,631.7 725.0,632.5 729.0,633.7 733.0,635.3 737.0,636.9 741.0,638.1 745.0,638.8 749.0,639.3 753.0,639.7 757.0,639.9 761.0,640.2 765.0,640.3 769.0,640.4 773.0,640.5 777.0,640.6 781.0,640.9 785.0,641.4 789.0,642.1 793.0,642.8 797.0,643.1 801.0,643.1 805.0,642.9 809.0,642.7 813.0,642.3 817.0,642.0 821.0,641.8 825.0,641.7 829.0,641.8 833.0,641.8 837.0,641.8 841.0,641.7 845.0,641.3 849.0,640.5 853.0,639.6 857.0,638.5 861.0,637.3 865.0,636.2 869.0,635.3 873.0,634.6 877.0,634.0 881.0,633.4 885.0,632.9 889.0,632.3 893.0,631.5 897.0,630.6 901.0,629.6 905.0,628.4 909.0,627.3 913.0,626.1 917.0,625.0 921.0,623.8 925.0,623.1 929.0,623.5 933.0,624.3 937.0,625.2 941.0,625.9 945.0,626.6 949.0,627.3 953.0,628.0 957.0,628.4 961.0,628.6 965.0,628.7 969.0,628.8 973.0,628.8 977.0,628.8 981.0,628.9 985.0,629.1 989.0,629.3 993.0,630.4 997.0,631.5 1001.0,631.7 1005.0,631.9 1009.0,632.0 1013.0,632.1 1017.0,632.1 1021.0,632.0 1025.0,631.8 1029.0,631.5 1033.0,631.0 1037.0,630.0 1041.0,628.9 1045.0,627.8 1049.0,626.6 1053.0,625.3 1057.0,624.1 1061.0,623.1 1065.0,622.6 1069.0,622.3 1073.0,622.2 1077.0,622.2 1081.0,622.4 1085.0,622.7 1089.0,623.1 1093.0,623.1 1097.0,622.9 1101.0,622.3 1105.0,621.7 1109.0,621.3 1113.0,620.9 1117.0,620.6 1121.0,620.4 1125.0,620.3 1129.0,620.6 1133.0,621.1 1137.0,621.6 1141.0,622.2 1145.0,622.8 1149.0,623.3 1153.0,623.9 1157.0,624.4 1161.0,624.8 1165.0,625.1 1169.0,625.6 1173.0,626.3 1177.0,627.6 1181.0,629.2 1185.0,630.9 1189.0,632.5 1193.0,633.8 1197.0,635.0 1201.0,636.1 1205.0,637.1 1209.0,638.0 1213.0,638.7 1217.0,639.3 1221.0,639.9 1225.0,640.7 1229.0,641.4 1233.0,642.0 1237.0,642.4 1241.0,642.4 1245.0,642.2 1249.0,641.9 1253.0,641.6 1257.0,641.4 1261.0,641.3 1265.0,641.4 1269.0,641.6 1273.0,642.0 1277.0,642.4 1281.0,642.9 1285.0,643.4 1289.0,644.0 1293.0,644.2 1297.0,644.1 1301.0,643.7 1305.0,643.3 1309.0,643.1 1313.0,643.2 1317.0,643.5 1321.0,643.8 1325.0,644.2 1329.0,644.8 1333.0,645.4 1337.0,646.0 1341.0,646.5 1345.0,646.7 1349.0,646.8 1353.0,646.8 1357.0,646.8 1361.0,647.0 1365.0,647.4 1369.0,648.2 1373.0,649.4 1377.0,650.8 1381.0,652.1 1385.0,653.2 1389.0,654.3 1393.0,655.5 1397.0,656.7 1401.0,658.3 1405.0,659.9 1409.0,661.6 1413.0,663.3 1417.0,664.9 1421.0,666.4 1425.0,668.1 1429.0,669.8 1433.0,671.8 1437.0,673.9 1441.0,676.1 1445.0,678.2 1449.0,680.4 1453.0,682.0 1457.0,682.4 1461.0,682.4 1465.0,682.3 1469.0,682.3" fill="none" stroke="#1e90ff" stroke-width="1.2"/>
<polyline points="5.0,758.5 9.0,757.7 13.0,756.9 17.0,756.2 21.0,755.3 25.0,754.3 29.0,752.9 33.0,751.2 37.0,749.2 41.0,747.1 45.0,744.7 49.0,742.3 53.0,739.8 57.0,737.2 61.0,734.5 65.0,731.7 69.0,728.8 73.0,725.9 77.0,723.0 81.0,720.2 85.0,717.3 89.0,714.4 93.0,711.6 97.0,708.8 101.0,706.2 105.0,703.7 109.0,701.3 113.0,699.0 117.0,696.8 121.0,694.9 125.0,693.2 129.0,691.8 133.0,690.8 137.0,689.9 141.0,689.2 145.0,688.5 149.0,687.6 153.0,686.6 157.0,685.6 161.0,684.6 165.0,683.5 169.0,682.3 173.0,681.0 177.0,679.4 181.0,677.6 185.0,675.7 189.0,673.8 193.0,672.1 197.0,670.8 201.0,669.9 205.0,669.6 209.0,669.6 213.0,669.8 217.0,670.9 221.0,672.6 225.0,674.4 229.0,676.3 233.0,678.2 237.0,680.1 241.0,681.7 245.0,682.9 249.0,683.7 253.0,684.1 257.0,684.3 261.0,684.4 265.0,684.4 269.0,684.4 273.0,684.4 277.0,684.4 281.0,684.4 285.0,684.4 289.0,684.3 293.0,684.3 297.0,684.2 301.0,684.1 305.0,684.1 309.0,684.1 313.0,684.1 317.0,684.2 321.0,684.9 325.0,685.7 329.0,685.6 333.0,685.3 337.0,685.0 341.0,684.8 345.0,684.6 349.0,684.5 353.0,684.4 357.0,684.4 361.0,684.5 365.0,684.8 369.0,685.3 373.0,686.2 377.0,687.1 381.0,688.1 385.0,688.9 389.0,689.4 393.0,689.6 397.0,689.6 401.0,689.4 405.0,689.2 409.0,689.1 413.0,689.0 417.0,689.2 421.0,689.4 425.0,689.6 429.0,689.9 433.0,690.1 437.0,690.4 441.0,690.5 445.0,690.7 449.0,690.9 453.0,691.1 457.0,691.2 461.0,691.3 465.0,691.3 469.0,691.1 473.0,690.9 477.0,690.8 481.0,690.8 485.0,690.9 489.0,691.5 493.0,692.6 497.0,693.6 501.0,694.1 505.0,694.0 509.0,693.6 513.0,693.0 517.0,692.5 521.0,692.2 525.0,692.2 529.0,692.8 533.0,693.7 537.0,694.9 541.0,696.0 545.0,697.1 549.0,697.8 553.0,698.3 557.0,698.7 561.0,698.9 565.0,699.2 569.0,699.3 573.0,699.4 577.0,699.6 581.0,699.7 585.0,699.8 589.0,699.8 593.0,699.8 597.0,699.8 601.0,699.7 605.0,699.7 609.0,699.7 613.0,699.6 617.0,699.6 621.0,699.6 625.0,699.6 629.0,699.7 633.0,700.2 637.0,700.6 641.0,700.5 645.0,700.2 649.0,699.9 653.0,699.6 657.0,699.3 661.0,699.1 665.0,699.1 669.0,699.1 673.0,699.1 677.0,699.2 681.0,699.2 685.0,699.2 689.0,699.2 693.0,699.1 697.0,698.3 701.0,697.8 705.0,698.5 709.0,699.4 713.0,700.7 717.0,702.5 721.0,706.4 725.0,710.0 729.0,710.9 733.0,711.4 737.0,711.7 741.0,711.8 745.0,711.8 749.0,711.8 753.0,711.8 757.0,711.7 761.0,711.4 765.0,711.2 769.0,711.0 773.0,710.9 777.0,711.0 781.0,711.2 785.0,711.4 789.0,711.7 793.0,711.8 797.0,711.8 801.0,711.5 805.0,710.9 809.0,710.3 813.0,710.0 817.0,709.8 821.0,709.8 825.0,709.8 829.0,709.9 833.0,709.9 837.0,710.0 841.0,710.0 845.0,710.0 849.0,710.0 853.0,710.0 857.0,710.0 861.0,710.0 865.0,709.8 869.0,709.7 873.0,709.5 877.0,709.3 881.0,709.1 885.0,709.0 889.0,709.0 893.0,708.9 897.0,708.9 901.0,708.9 905.0,708.9 909.0,709.0 913.0,709.3 917.0,709.7 921.0,710.1 925.0,710.3 929.0,710.4 933.0,710.3 937.0,710.1 941.0,710.0 945.0,709.7 949.0,709.4 953.0,709.2 957.0,709.4 961.0,710.0 965.0,710.9 969.0,712.0 973.0,713.0 977.0,713.9 981.0,714.6 985.0,714.6 989.0,713.7 993.0,712.3 997.0,710.7 1001.0,709.1 1005.0,708.1 1009.0,707.5 1013.0,707.0 1017.0,706.7 1021.0,706.6 1025.0,706.7 1029.0,707.2 1033.0,708.1 1037.0,709.6 1041.0,711.5 1045.0,713.7 1049.0,716.2 1053.0,719.1 1057.0,722.1 1061.0,724.9 1065.0,727.6 1069.0,730.4 1073.0,732.8 1077.0,734.6 1081.0,735.6 1085.0,736.0 1089.0,736.1 1093.0,736.1 1097.0,736.1 1101.0,736.0 1105.0,735.8 1109.0,735.6 1113.0,735.4 1117.0,735.2 1121.0,735.0 1125.0,734.8 1129.0,734.6 1133.0,734.5 1137.0,734.3 1141.0,734.2 1145.0,734.2 1149.0,734.2 1153.0,734.3 1157.0,734.3 1161.0,734.3 1165.0,734.2 1169.0,734.0 1173.0,733.7 1177.0,733.3 1181.0,732.9 1185.0,732.6 1189.0,732.4 1193.0,732.2 1197.0,732.1 1201.0,732.0 1205.0,732.0 1209.0,732.1 1213.0,732.4 1217.0,732.8 1221.0,733.3 1225.0,734.0 1229.0,734.7 1233.0,735.4 1237.0,736.1 1241.0,736.7 1245.0,737.2 1249.0,737.8 1253.0,738.4 1257.0,739.1 1261.0,739.8 1265.0,740.8 1269.0,742.1 1273.0,743.3 1277.0,744.5 1281.0,745.6 1285.0,746.6 1289.0,747.5 1293.0,748.2 1297.0,748.6 1301.0,748.2 1305.0,747.4 1309.0,746.3 1313.0,745.1 1317.0,743.9 1321.0,742.7 1325.0,741.5 1329.0,740.2 1333.0,738.9 1337.0,737.5 1341.0,736.5 1345.0,736.2 1349.0,736.2 1353.0,736.3 1357.0,736.5 1361.0,736.8 1365.0,737.1 1369.0,737.7 1373.0,738.3 1377.0,739.3 1381.0,740.4 1385.0,741.5 1389.0,742.6 1393.0,743.6 1397.0,744.5 1401.0,745.4 1405.0,746.4 1409.0,747.6 1413.0,749.1 1417.0,750.3 1421.0,751.0 1425.0,751.0 1429.0,750.5 1433.0,749.8 1437.0,749.2 1441.0,748.7 1445.0,748.1 1449.0,747.6 1453.0,747.3 1457.0,747.2 1461.0,747.2 1465.0,747.3 1469.0,747.3" fill="none" stroke="#1e90ff" stroke-width="1.2"/>
<polyline points="5.0,692.2 9.0,691.0 13.0,689.9 17.0,688.8 21.0,687.7 25.0,686.3 29.0,684.8 33.0,682.9 37.0,680.8 41.0,678.5 45.0,676.2 49.0,673.9 53.0,671.7 57.0,669.6 61.0,667.4 65.0,665.3 69.0,663.2 73.0,661.3 77.0,659.5 81.0,658.0 85.0,656.7 89.0,655.5 93.0,654.3 97.0,653.2 101.0,652.1 105.0,650.9 109.0,649.8 113.0,648.8 117.0,647.7 121.0,646.6 125.0,645.5 129.0,644.3 133.0,643.0 137.0,641.8 141.0,640.9 145.0,640.2 149.0,639.7 153.0,639.2 157.0,638.8 161.0,638.5 165.0,638.1 169.0,637.7 173.0,637.4 177.0,637.1 181.0,636.8 185.0,636.5 189.0,636.2 193.0,635.8 197.0,635.3 201.0,635.0 205.0,634.9 209.0,635.1 213.0,635.5 217.0,635.9 221.0,636.5 225.0,637.0 229.0,637.5 233.0,638.1 237.0,638.7 241.0,639.4 245.0,640.0 249.0,640.5 253.0,640.9 257.0,641.1 261.0,641.1 265.0,641.1 269.0,641.0 273.0,640.9 277.0,640.9 281.0,640.8 285.0,640.8 289.0,640.7 293.0,640.6 297.0,640.7 301.0,640.9 305.0,641.3 309.0,641.9 313.0,642.7 317.0,643.7 321.0,645.5 325.0,647.4 329.0,648.4 333.0,649.1 337.0,649.7 341.0,650.2 345.0,650.6 349.0,650.9 353.0,651.2 357.0,651.5 361.0,651.7 365.0,652.1 369.0,652.5 373.0,652.9 377.0,653.3 381.0,653.8 385.0,654.3 389.0,654.9 393.0,655.6 397.0,656.4 401.0,657.3 405.0,658.2 409.0,659.0 413.0,659.5 417.0,660.0 421.0,660.2 425.0,660.4 429.0,660.5 433.0,660.5 437.0,660.5 441.0,660.3 445.0,660.1 449.0,659.7 453.0,659.3 457.0,659.0 461.0,658.6 465.0,658.3 469.0,657.9 473.0,657.5 477.0,657.2 481.0,656.9 485.0,656.7 489.0,656.8 493.0,656.9 497.0,657.2 501.0,657.4 505.0,657.6 509.0,657.7 513.0,657.5 517.0,657.2 521.0,656.9 525.0,656.6 529.0,656.5 533.0,656.7 537.0,657.4 541.0,658.4 545.0,659.7 549.0,661.0 553.0,662.2 557.0,663.3 561.0,664.2 565.0,665.1 569.0,666.0 573.0,666.7 577.0,667.4 581.0,668.0 585.0,668.3 589.0,668.5 593.0,668.7 597.0,668.7 601.0,668.8 605.0,668.9 609.0,669.1 613.0,669.3 617.0,669.5 621.0,669.6 625.0,669.8 629.0,669.8 633.0,669.8 637.0,669.8 641.0,669.7 645.0,669.6 649.0,669.5 653.0,669.3 657.0,669.1 661.0,668.9 665.0,668.5 669.0,668.1 673.0,667.5 677.0,667.0 681.0,666.5 685.0,666.0 689.0,665.5 693.0,665.2 697.0,664.9 701.0,664.7 705.0,664.7 709.0,665.2 713.0,666.2 717.0,667.7 721.0,669.3 725.0,670.8 729.0,672.1 733.0,673.5 737.0,674.7 741.0,675.4 745.0,675.7 749.0,675.8 753.0,675.7 757.0,675.5 761.0,675.4 765.0,675.4 769.0,675.6 773.0,675.9 777.0,676.2 781.0,676.4 785.0,676.4 789.0,676.5 793.0,676.5 797.0,676.5 801.0,676.4 805.0,676.4 809.0,676.3 813.0,676.1 817.0,675.9 821.0,675.8 825.0,675.6 829.0,675.4 833.0,675.3 837.0,675.2 841.0,675.0 845.0,674.9 849.0,674.7 853.0,674.5 857.0,674.1 861.0,673.6 865.0,673.1 869.0,672.6 873.0,672.2 877.0,671.7 881.0,671.2 885.0,670.8 889.0,670.3 893.0,669.8 897.0,669.3 901.0,668.7 905.0,668.2 909.0,667.7 913.0,667.3 917.0,667.0 921.0,667.0 925.0,667.1 929.0,667.3 933.0,667.5 937.0,667.8 941.0,668.0 945.0,668.0 949.0,668.1 953.0,668.2 957.0,668.5 961.0,669.1 965.0,669.8 969.0,670.6 973.0,671.1 977.0,671.5 981.0,671.7 985.0,671.8 989.0,671.7 993.0,671.4 997.0,670.8 1001.0,670.3 1005.0,669.8 1009.0,669.5 1013.0,669.1 1017.0,668.9 1021.0,668.9 1025.0,669.0 1029.0,669.4 1033.0,669.8 1037.0,670.4 1041.0,671.0 1045.0,671.8 1049.0,672.7 1053.0,673.6 1057.0,674.5 1061.0,675.5 1065.0,676.5 1069.0,677.3 1073.0,677.9 1077.0,678.5 1081.0,678.9 1085.0,679.2 1089.0,679.2 1093.0,679.1 1097.0,678.8 1101.0,678.6 1105.0,678.3 1109.0,677.9 1113.0,677.5 1117.0,677.3 1121.0,677.3 1125.0,677.4 1129.0,677.6 1133.0,677.8 1137.0,678.0 1141.0,678.2 1145.0,678.4 1149.0,678.6 1153.0,678.7 1157.0,678.7 1161.0,678.9 1165.0,679.2 1169.0,679.7 1173.0,680.5 1177.0,681.3 1181.0,682.0 1185.0,682.5 1189.0,683.0 1193.0,683.4 1197.0,683.8 1201.0,684.1 1205.0,684.2 1209.0,684.4 1213.0,684.8 1217.0,685.4 1221.0,686.3 1225.0,687.2 1229.0,687.9 1233.0,688.4 1237.0,688.8 1241.0,689.1 1245.0,689.4 1249.0,689.8 1253.0,690.1 1257.0,690.5 1261.0,690.9 1265.0,691.5 1269.0,692.1 1273.0,692.7 1277.0,693.3 1281.0,694.1 1285.0,694.9 1289.0,695.5 1293.0,696.0 1297.0,696.0 1301.0,695.7 1305.0,695.4 1309.0,695.0 1313.0,694.7 1317.0,694.4 1321.0,694.0 1325.0,693.5 1329.0,692.9 1333.0,692.1 1337.0,691.4 1341.0,690.9 1345.0,690.7 1349.0,690.6 1353.0,690.7 1357.0,690.9 1361.0,691.3 1365.0,692.0 1369.0,692.7 1373.0,693.5 1377.0,694.4 1381.0,695.5 1385.0,696.6 1389.0,697.8 1393.0,699.3 1397.0,700.9 1401.0,702.5 1405.0,704.0 1409.0,705.4 1413.0,706.7 1417.0,707.9 1421.0,709.0 1425.0,710.1 1429.0,711.2 1433.0,712.1 1437.0,712.8 1441.0,713.2 1445.0,713.5 1449.0,713.6 1453.0,713.7 1457.0,713.8 1461.0,713.8 1465.0,713.7 1469.0,713.7" fill="none" stroke="#ffff00" stroke-width="2"/>
<polyline points="5,633 21,625.9 29,615.7 45,601.7 69,597.6 77,618.5 85,620.3 93,636.2 109,647.4 117,643.7 125,624.1 133,613.8 141,629.7 149,647.4 157,651.1 165,659.5 173,658.6 181,657.7 189,664.2 197,666.1 205,666.1 213,657.7 221,668.9 229,682.9 237,682.9 245,672.6 253,668.9 261,652.1 277,635.3 285,619.4 293,621.3 301,631.5 309,644.6 317,655.8 325,674.5 333,663.3 341,665.2 349,653 357,646.5 365,654.9 373,663.3 381,674.5 389,678.2 397,676.4 405,672.6 413,674.5 421,671.7 429,671.7 437,671.7 445,649.3 453,638.1 461,625 469,636.2 477,643.7 485,659.5 493,690.4 501,685.7 509,670.8 517,660.5 525,664.2 533,678.2 541,689.4 549,689.4 557,682 565,680.1 573,684.8 581,682.9 589,678.2 597,675.4 605,679.2 613,675.4 621,667 629,668.9 637,670.8 645,672.6 653,657.7 661,647.4 677,636.2 685,641.3 693,641.8 701,657.7 709,683.8 717,702.5 725,721.2 733,711.8 741,698.8 749,691.3 757,685.7 765,686.6 773,690.4 781,687.6 789,678.2 797,676.4 805,673.6 813,671.7 821,670.8 829,674.5 837,683.8 845,678.2 853,663.3 861,646.1 869,645.5 877,644.6 885,646.9 893,646.9 901,641.8 909,632.5 917,631.2 925,635.3 933,653.9 941,660.5 949,653.9 957,653.6 965,684.8 973,698.8 981,711.8 989,709 997,699.7 1005,680.1 1013,676.4 1021,679.2 1029,685.7 1037,702.5 1045,724.9 1053,737 1061,740.8 1069,743.9 1077,729.6 1085,704.4 1093,683.8 1101,666.1 1109,659.9 1117,659.5 1125,656.7 1133,653.9 1141,653.6 1149,656.2 1157,661.4 1165,661.4 1173,660.5 1181,664.2 1189,678.2 1197,679.7 1205,677.8 1213,682 1221,693.2 1229,704.4 1237,716.5 1245,724.9 1253,732.4 1261,722.1 1269,725.3 1277,725.8 1285,725.3 1293,725.3 1301,705.3 1309,693.2 1317,693.2 1325,703.4 1333,714.6 1341,714.6 1349,714.6 1357,706.2 1365,705.3 1373,713.7 1381,725.8 1389,736.1 1397,739.8 1405,741.7 1413,743.9 1421,746.4 1429,721.2 1437,718.4 1445,722.1 1453,700.6 1461,690.9 1469,682.9" fill="none" stroke="#008000" stroke-width="2"/>
<polyline points="5.0,634.9 9.0,633.7 13.0,632.5 17.0,631.2 21.0,629.7 25.0,628.0 29.0,626.2 33.0,624.4 37.0,622.5 41.0,620.5 45.0,618.5 49.0,616.2 53.0,613.7 57.0,611.1 61.0,608.6 65.0,606.5 69.0,605.0 73.0,604.5 77.0,604.8 81.0,605.8 85.0,607.3 89.0,609.2 93.0,611.6 97.0,614.5 101.0,617.5 105.0,621.3 109.0,625.6 113.0,629.6 117.0,632.5 121.0,633.6 125.0,633.5 129.0,633.1 133.0,633.0 137.0,633.7 141.0,634.5 145.0,635.4 149.0,636.2 153.0,636.7 157.0,637.1 161.0,637.6 165.0,638.6 169.0,640.3 173.0,642.3 177.0,644.7 181.0,647.4 185.0,650.9 189.0,654.9 193.0,658.7 197.0,661.4 201.0,662.5 205.0,662.4 209.0,662.1 213.0,662.4 217.0,663.5 221.0,665.0 225.0,666.6 229.0,668.0 233.0,669.1 237.0,670.3 241.0,671.2 245.0,671.7 249.0,671.8 253.0,671.6 257.0,671.0 261.0,669.8 265.0,668.0 269.0,665.7 273.0,662.9 277.0,659.5 281.0,655.2 285.0,650.0 289.0,644.9 293.0,640.9 297.0,638.1 301.0,636.2 305.0,634.8 309.0,633.8 313.0,633.6 317.0,634.9 321.0,638.1 325.0,641.8 329.0,644.7 333.0,647.4 337.0,649.9 341.0,652.1 345.0,653.9 349.0,655.3 353.0,656.5 357.0,657.7 361.0,658.8 365.0,659.8 369.0,660.7 373.0,661.4 377.0,661.9 381.0,662.2 385.0,662.6 389.0,663.3 393.0,664.4 397.0,665.9 401.0,667.5 405.0,668.9 409.0,670.2 413.0,671.6 417.0,672.7 421.0,673.6 425.0,674.2 429.0,674.6 433.0,674.5 437.0,673.6 441.0,671.4 445.0,668.2 449.0,664.7 453.0,661.4 457.0,658.4 461.0,655.3 465.0,652.5 469.0,650.2 473.0,648.3 477.0,646.6 481.0,645.6 485.0,645.5 489.0,646.9 493.0,649.2 497.0,652.1 501.0,654.9 505.0,657.6 509.0,660.4 513.0,663.2 517.0,666.1 521.0,669.1 525.0,672.3 529.0,675.2 533.0,677.3 537.0,678.2 541.0,678.4 545.0,678.2 549.0,678.2 553.0,678.3 557.0,678.4 561.0,678.6 565.0,679.2 569.0,680.6 573.0,682.6 577.0,684.4 581.0,685.3 585.0,684.9 589.0,683.7 593.0,682.2 597.0,681.0 601.0,680.5 605.0,680.2 609.0,679.8 613.0,679.2 617.0,677.9 621.0,676.4 625.0,674.8 629.0,673.6 633.0,673.4 637.0,673.6 641.0,673.4 645.0,672.6 649.0,671.0 653.0,669.2 657.0,667.2 661.0,665.2 665.0,663.1 669.0,660.9 673.0,658.8 677.0,656.7 681.0,654.8 685.0,652.9 689.0,651.0 693.0,649.3 697.0,647.3 701.0,646.5 705.0,647.8 709.0,651.1 713.0,656.5 717.0,662.6 721.0,668.9 725.0,674.5 729.0,679.3 733.0,683.7 737.0,687.7 741.0,691.3 745.0,694.7 749.0,697.8 753.0,700.2 757.0,701.6 761.0,701.6 765.0,700.5 769.0,698.8 773.0,696.9 777.0,694.6 781.0,691.8 785.0,689.0 789.0,686.6 793.0,684.8 797.0,683.4 801.0,682.2 805.0,681.0 809.0,679.9 813.0,679.0 817.0,678.1 821.0,677.3 825.0,676.5 829.0,675.7 833.0,675.0 837.0,674.5 841.0,674.3 845.0,674.4 849.0,674.3 853.0,673.6 857.0,671.8 861.0,669.4 865.0,666.7 869.0,664.2 873.0,662.1 877.0,660.1 881.0,658.0 885.0,655.8 889.0,653.3 893.0,650.5 897.0,647.8 901.0,645.5 905.0,643.6 909.0,642.0 913.0,640.7 917.0,639.9 921.0,639.8 925.0,640.3 929.0,641.0 933.0,641.8 937.0,642.7 941.0,643.7 945.0,644.7 949.0,645.5 953.0,645.1 957.0,645.5 961.0,650.0 965.0,655.8 969.0,661.4 973.0,667.3 977.0,672.9 981.0,678.2 985.0,682.7 989.0,685.7 993.0,687.5 997.0,688.8 1001.0,689.9 1005.0,691.3 1009.0,693.8 1013.0,695.6 1017.0,694.6 1021.0,692.8 1025.0,691.7 1029.0,690.9 1033.0,690.8 1037.0,691.3 1041.0,692.8 1045.0,695.0 1049.0,697.9 1053.0,701.6 1057.0,706.5 1061.0,711.8 1065.0,717.3 1069.0,722.1 1073.0,725.3 1077.0,727.1 1081.0,727.8 1085.0,727.1 1089.0,725.2 1093.0,722.1 1097.0,717.9 1101.0,712.8 1105.0,706.8 1109.0,700.6 1113.0,695.1 1117.0,689.4 1121.0,682.5 1125.0,675.4 1129.0,668.8 1133.0,663.3 1137.0,659.8 1141.0,657.7 1145.0,656.8 1149.0,656.7 1153.0,656.9 1157.0,657.3 1161.0,657.7 1165.0,658.1 1169.0,658.3 1173.0,658.6 1177.0,658.8 1181.0,659.5 1185.0,662.2 1189.0,665.2 1193.0,667.3 1197.0,668.9 1201.0,669.4 1205.0,669.8 1209.0,671.4 1213.0,673.6 1217.0,676.1 1221.0,679.2 1225.0,682.7 1229.0,686.6 1233.0,690.8 1237.0,695.0 1241.0,698.9 1245.0,702.5 1249.0,705.8 1253.0,709.0 1257.0,712.4 1261.0,715.6 1265.0,718.4 1269.0,720.8 1273.0,722.9 1277.0,724.5 1281.0,725.4 1285.0,725.8 1289.0,726.3 1293.0,725.8 1297.0,723.4 1301.0,720.2 1305.0,717.3 1309.0,714.6 1313.0,712.9 1317.0,711.5 1321.0,709.8 1325.0,708.5 1329.0,707.7 1333.0,707.2 1337.0,706.7 1341.0,706.2 1345.0,705.4 1349.0,704.7 1353.0,704.7 1357.0,705.3 1361.0,706.5 1365.0,708.1 1369.0,710.0 1373.0,711.8 1377.0,713.3 1381.0,714.6 1385.0,716.0 1389.0,717.4 1393.0,719.2 1397.0,721.2 1401.0,723.3 1405.0,725.8 1409.0,728.9 1413.0,732.0 1417.0,735.2 1421.0,737.6 1425.0,737.8 1429.0,737.0 1433.0,735.7 1437.0,734.2 1441.0,733.5 1445.0,732.4 1449.0,729.6 1453.0,725.8 1457.0,721.3 1461.0,716.5 1465.0,712.1 1469.0,707.7" fill="none" stroke="#ff0000" stroke-width="2.2"/>
</g>
<g clip-path="url(#clipHist)">
<rect x="4" y="775" width="3" height="34" fill="#008000"/>
<rect x="12" y="775" width="3" height="34" fill="#00ff00"/>
<rect x="20" y="776" width="3" height="33" fill="#008000"/>
<rect x="28" y="776" width="3" height="33" fill="#008000"/>
<rect x="36" y="779" width="3" height="30" fill="#008000"/>
<rect x="44" y="781" width="3" height="28" fill="#008000"/>
<rect x="52" y="782" width="3" height="27" fill="#008000"/>
<rect x="60" y="784" width="3" height="25" fill="#008000"/>
<rect x="68" y="785" width="3" height="24" fill="#008000"/>
<rect x="76" y="787" width="3" height="22" fill="#008000"/>
<rect x="84" y="789" width="3" height="20" fill="#008000"/>
<rect x="92" y="791" width="3" height="18" fill="#008000"/>
<rect x="100" y="793" width="3" height="16" fill="#008000"/>
<rect x="108" y="794" width="3" height="15" fill="#008000"/>
<rect x="116" y="794" width="3" height="15" fill="#008000"/>
<rect x="124" y="795" width="3" height="14" fill="#008000"/>
<rect x="132" y="797" width="3" height="12" fill="#008000"/>
<rect x="140" y="799" width="3" height="10" fill="#008000"/>
<rect x="148" y="800" width="3" height="9" fill="#008000"/>
<rect x="155" y="800" width="5" height="9" fill="#ff69b4"/>
<rect x="163" y="801" width="5" height="8" fill="#ff69b4"/>
<rect x="171" y="801" width="5" height="8" fill="#008080"/>
<rect x="179" y="802" width="5" height="7" fill="#ff69b4"/>
<rect x="187" y="802" width="5" height="7" fill="#008080"/>
<rect x="195" y="802" width="5" height="7" fill="#008080"/>
<rect x="203" y="801" width="5" height="8" fill="#008080"/>
<rect x="211" y="801" width="5" height="8" fill="#008080"/>
<rect x="219" y="801" width="5" height="8" fill="#ff69b4"/>
<rect x="227" y="801" width="5" height="8" fill="#008080"/>
<rect x="236" y="799" width="3" height="10" fill="#00ff00"/>
<rect x="244" y="798" width="3" height="11" fill="#00ff00"/>
<rect x="252" y="798" width="3" height="11" fill="#00ff00"/>
<rect x="260" y="798" width="3" height="11" fill="#00ff00"/>
<rect x="268" y="798" width="3" height="11" fill="#008000"/>
<rect x="276" y="799" width="3" height="10" fill="#008000"/>
<rect x="284" y="799" width="3" height="10" fill="#008000"/>
<rect x="292" y="799" width="3" height="10" fill="#008000"/>
<rect x="300" y="799" width="3" height="10" fill="#00ff00"/>
<rect x="308" y="799" width="3" height="10" fill="#008000"/>
<rect x="316" y="799" width="3" height="10" fill="#008000"/>
<rect x="324" y="800" width="3" height="9" fill="#008000"/>
<rect x="332" y="800" width="3" height="9" fill="#008000"/>
<rect x="339" y="802" width="5" height="7" fill="#ff69b4"/>
<rect x="347" y="801" width="5" height="8" fill="#008080"/>
<rect x="355" y="802" width="5" height="7" fill="#ff69b4"/>
<rect x="363" y="804" width="5" height="5" fill="#ff69b4"/>
<rect x="371" y="805" width="5" height="4" fill="#ff69b4"/>
<rect x="379" y="806" width="5" height="3" fill="#ff69b4"/>
<rect x="387" y="806" width="5" height="3" fill="#ff69b4"/>
<rect x="395" y="807" width="5" height="2" fill="#ff69b4"/>
<rect x="403" y="808" width="5" height="1" fill="#ff69b4"/>
<rect x="411" y="808" width="5" height="1" fill="#ff69b4"/>
<rect x="419" y="809" width="5" height="2" fill="#ff69b4"/>
<rect x="427" y="809" width="5" height="2" fill="#ff69b4"/>
<rect x="435" y="809" width="5" height="2" fill="#ff69b4"/>
<rect x="443" y="809" width="5" height="2" fill="#ff69b4"/>
<rect x="451" y="809" width="5" height="3" fill="#ff69b4"/>
<rect x="459" y="809" width="5" height="4" fill="#ff69b4"/>
<rect x="467" y="809" width="5" height="5" fill="#ff69b4"/>
<rect x="475" y="809" width="5" height="7" fill="#ff69b4"/>
<rect x="483" y="809" width="5" height="8" fill="#ff69b4"/>
<rect x="491" y="809" width="5" height="7" fill="#008080"/>
<rect x="499" y="809" width="5" height="6" fill="#008080"/>
<rect x="507" y="809" width="5" height="5" fill="#008080"/>
<rect x="515" y="809" width="5" height="5" fill="#ff69b4"/>
<rect x="523" y="809" width="5" height="5" fill="#008080"/>
<rect x="531" y="809" width="5" height="5" fill="#008080"/>
<rect x="539" y="809" width="5" height="3" fill="#008080"/>
<rect x="547" y="809" width="5" height="2" fill="#008080"/>
<rect x="555" y="809" width="5" height="3" fill="#ff69b4"/>
<rect x="563" y="809" width="5" height="4" fill="#ff69b4"/>
<rect x="571" y="809" width="5" height="5" fill="#ff69b4"/>
<rect x="579" y="809" width="5" height="5" fill="#ff69b4"/>
<rect x="587" y="809" width="5" height="5" fill="#ff69b4"/>
<rect x="595" y="809" width="5" height="5" fill="#ff69b4"/>
<rect x="603" y="809" width="5" height="6" fill="#ff69b4"/>
<rect x="611" y="809" width="5" height="6" fill="#ff69b4"/>
<rect x="619" y="809" width="5" height="6" fill="#ff69b4"/>
<rect x="627" y="809" width="5" height="6" fill="#ff69b4"/>
<rect x="635" y="809" width="5" height="5" fill="#008080"/>
<rect x="643" y="809" width="5" height="5" fill="#008080"/>
<rect x="651" y="809" width="5" height="5" fill="#008080"/>
<rect x="659" y="809" width="5" height="6" fill="#ff69b4"/>
<rect x="667" y="809" width="5" height="8" fill="#ff69b4"/>
<rect x="676" y="809" width="3" height="10" fill="#ff0000"/>
<rect x="684" y="809" width="3" height="12" fill="#ff0000"/>
<rect x="692" y="809" width="3" height="12" fill="#ff0000"/>
<rect x="700" y="809" width="3" height="13" fill="#ff0000"/>
<rect x="708" y="809" width="3" height="14" fill="#ff0000"/>
<rect x="716" y="809" width="3" height="13" fill="#b22222"/>
<rect x="724" y="809" width="3" height="12" fill="#b22222"/>
<rect x="731" y="809" width="5" height="9" fill="#008080"/>
<rect x="739" y="809" width="5" height="7" fill="#008080"/>
<rect x="747" y="809" width="5" height="6" fill="#008080"/>
<rect x="755" y="809" width="5" height="5" fill="#008080"/>
<rect x="763" y="809" width="5" height="3" fill="#008080"/>
<rect x="771" y="809" width="5" height="2" fill="#008080"/>
<rect x="779" y="809" width="5" height="2" fill="#008080"/>
<rect x="787" y="807" width="5" height="2" fill="#008080"/>
<rect x="795" y="806" width="5" height="3" fill="#008080"/>
<rect x="803" y="806" width="5" height="3" fill="#008080"/>
<rect x="811" y="806" width="5" height="3" fill="#ff69b4"/>
<rect x="819" y="806" width="5" height="3" fill="#ff69b4"/>
<rect x="827" y="806" width="5" height="3" fill="#008080"/>
<rect x="835" y="804" width="5" height="5" fill="#008080"/>
<rect x="843" y="802" width="5" height="7" fill="#008080"/>
<rect x="851" y="801" width="5" height="8" fill="#008080"/>
<rect x="859" y="801" width="5" height="8" fill="#008080"/>
<rect x="867" y="801" width="5" height="8" fill="#ff69b4"/>
<rect x="875" y="802" width="5" height="7" fill="#ff69b4"/>
<rect x="883" y="806" width="5" height="3" fill="#ff69b4"/>
<rect x="891" y="809" width="5" height="2" fill="#ff69b4"/>
<rect x="899" y="809" width="5" height="5" fill="#ff69b4"/>
<rect x="907" y="809" width="5" height="9" fill="#ff69b4"/>
<rect x="916" y="809" width="3" height="12" fill="#ff0000"/>
<rect x="924" y="809" width="3" height="15" fill="#ff0000"/>
<rect x="932" y="809" width="3" height="17" fill="#ff0000"/>
<rect x="940" y="809" width="3" height="19" fill="#ff0000"/>
<rect x="948" y="809" width="3" height="21" fill="#ff0000"/>
<rect x="956" y="809" width="3" height="23" fill="#ff0000"/>
<rect x="964" y="809" width="3" height="24" fill="#ff0000"/>
<rect x="972" y="809" width="3" height="25" fill="#ff0000"/>
<rect x="980" y="809" width="3" height="25" fill="#b22222"/>
<rect x="988" y="809" width="3" height="24" fill="#b22222"/>
<rect x="996" y="809" width="3" height="24" fill="#ff0000"/>
<rect x="1004" y="809" width="3" height="25" fill="#ff0000"/>
<rect x="1012" y="809" width="3" height="26" fill="#ff0000"/>
<rect x="1020" y="809" width="3" height="27" fill="#ff0000"/>
<rect x="1028" y="809" width="3" height="28" fill="#ff0000"/>
<rect x="1036" y="809" width="3" height="27" fill="#b22222"/>
<rect x="1044" y="809" width="3" height="25" fill="#b22222"/>
<rect x="1052" y="809" width="3" height="21" fill="#b22222"/>
<rect x="1060" y="809" width="3" height="18" fill="#b22222"/>
<rect x="1068" y="809" width="3" height="15" fill="#b22222"/>
<rect x="1076" y="809" width="3" height="11" fill="#b22222"/>
<rect x="1083" y="809" width="5" height="9" fill="#008080"/>
<rect x="1091" y="809" width="5" height="8" fill="#008080"/>
<rect x="1099" y="809" width="5" height="7" fill="#008080"/>
<rect x="1107" y="809" width="5" height="9" fill="#ff69b4"/>
<rect x="1115" y="809" width="5" height="9" fill="#ff69b4"/>
<rect x="1124" y="809" width="3" height="9" fill="#ff0000"/>
<rect x="1132" y="809" width="3" height="10" fill="#ff0000"/>
<rect x="1140" y="809" width="3" height="11" fill="#ff0000"/>
<rect x="1148" y="809" width="3" height="12" fill="#ff0000"/>
<rect x="1156" y="809" width="3" height="13" fill="#ff0000"/>
<rect x="1164" y="809" width="3" height="15" fill="#ff0000"/>
<rect x="1172" y="809" width="3" height="16" fill="#ff0000"/>
<rect x="1180" y="809" width="3" height="17" fill="#ff0000"/>
<rect x="1188" y="809" width="3" height="17" fill="#ff0000"/>
<rect x="1196" y="809" width="3" height="19" fill="#ff0000"/>
<rect x="1204" y="809" width="3" height="20" fill="#ff0000"/>
<rect x="1212" y="809" width="3" height="23" fill="#ff0000"/>
<rect x="1220" y="809" width="3" height="27" fill="#ff0000"/>
<rect x="1228" y="809" width="3" height="31" fill="#ff0000"/>
<rect x="1236" y="809" width="3" height="34" fill="#ff0000"/>
<rect x="1244" y="809" width="3" height="36" fill="#ff0000"/>
<rect x="1252" y="809" width="3" height="38" fill="#ff0000"/>
<rect x="1260" y="809" width="3" height="39" fill="#ff0000"/>
<rect x="1268" y="809" width="3" height="39" fill="#ff0000"/>
<rect x="1276" y="809" width="3" height="39" fill="#b22222"/>
<rect x="1284" y="809" width="3" height="40" fill="#ff0000"/>
<rect x="1292" y="809" width="3" height="39" fill="#b22222"/>
<rect x="1300" y="809" width="3" height="38" fill="#b22222"/>
<rect x="1308" y="809" width="3" height="37" fill="#b22222"/>
<rect x="1316" y="809" width="3" height="37" fill="#b22222"/>
<rect x="1324" y="809" width="3" height="36" fill="#b22222"/>
<rect x="1332" y="809" width="3" height="35" fill="#b22222"/>
<rect x="1340" y="809" width="3" height="34" fill="#b22222"/>
<rect x="1348" y="809" width="3" height="33" fill="#b22222"/>
<rect x="1356" y="809" width="3" height="32" fill="#b22222"/>
<rect x="1364" y="809" width="3" height="32" fill="#ff0000"/>
<rect x="1372" y="809" width="3" height="31" fill="#b22222"/>
<rect x="1380" y="809" width="3" height="30" fill="#b22222"/>
<rect x="1388" y="809" width="3" height="29" fill="#b22222"/>
<rect x="1396" y="809" width="3" height="27" fill="#b22222"/>
<rect x="1404" y="809" width="3" height="25" fill="#b22222"/>
<rect x="1412" y="809" width="3" height="23" fill="#b22222"/>
<rect x="1420" y="809" width="3" height="22" fill="#b22222"/>
<rect x="1428" y="809" width="3" height="20" fill="#b22222"/>
<rect x="1436" y="809" width="3" height="20" fill="#b22222"/>
<rect x="1444" y="809" width="3" height="18" fill="#b22222"/>
<rect x="1452" y="809" width="3" height="15" fill="#b22222"/>
<rect x="1460" y="809" width="3" height="16" fill="#ff0000"/>
<rect x="1468" y="809" width="3" height="15" fill="#b22222"/>
<rect x="5" y="794" width="1849" height="1" fill="#000"/>
<rect x="5" y="800" width="1849" height="1" fill="#000"/>
<rect x="5" y="817" width="1849" height="1" fill="#000"/>
<rect x="5" y="826" width="1849" height="1" fill="#000"/>
</g>
</g>
<g shape-rendering="auto">
<text x="11" y="44" font-size="0"></text>
<path d="M8 42 L17 42 L12.5 47.5 Z" fill="#fff"/>
<text x="23" y="49" style="font-size:13px" textLength="63" lengthAdjust="spacingAndGlyphs">EURUSD,H1</text><text x="95" y="49" style="font-size:13px" textLength="195" lengthAdjust="spacingAndGlyphs">1.16261 1.16363 1.16237 1.16340</text>
<text x="10" y="598" style="font-size:13px" textLength="439" lengthAdjust="spacingAndGlyphs">TDI pro plus Millon Method Traders 44.7281 29.4247 14.1214 44.4975 32.9116</text>
<text x="9" y="786" style="font-size:13px" textLength="408" lengthAdjust="spacingAndGlyphs">BUYGREEN - SELLRED By Millon Method Traders - MME DIGITALS -0.65770</text>
<rect x="1854" y="66" width="4" height="1" fill="#fff"/>
<text x="1861.5" y="71" class="ax">1.17775</text>
<rect x="1854" y="116" width="4" height="1" fill="#fff"/>
<text x="1861.5" y="120.5" class="ax">1.17605</text>
<rect x="1854" y="165" width="4" height="1" fill="#fff"/>
<text x="1861.5" y="170" class="ax">1.17435</text>
<rect x="1854" y="214" width="4" height="1" fill="#fff"/>
<text x="1861.5" y="219" class="ax">1.17265</text>
<rect x="1854" y="264" width="4" height="1" fill="#fff"/>
<text x="1861.5" y="269" class="ax">1.17095</text>
<rect x="1854" y="313" width="4" height="1" fill="#fff"/>
<text x="1861.5" y="318" class="ax">1.16925</text>
<rect x="1854" y="363" width="4" height="1" fill="#fff"/>
<text x="1861.5" y="368" class="ax">1.16755</text>
<rect x="1854" y="412" width="4" height="1" fill="#fff"/>
<text x="1861.5" y="417" class="ax">1.16585</text>
<rect x="1854" y="462" width="4" height="1" fill="#fff"/>
<text x="1861.5" y="467" class="ax">1.16415</text>
<rect x="1854" y="512" width="4" height="1" fill="#fff"/>
<text x="1861.5" y="516.5" class="ax">1.16245</text>
<rect x="1854" y="561" width="4" height="1" fill="#fff"/>
<text x="1861.5" y="566" class="ax">1.16075</text>
<rect x="1856" y="476" width="56" height="14" fill="#fff"/>
<text x="1861.5" y="488" class="ax" style="fill:#000">1.16340</text>
<text x="1858" y="596" class="ax">90.6645</text>
<text x="1858" y="637" class="ax">68</text>
<text x="1858" y="675" class="ax">50</text>
<text x="1858" y="714" class="ax">32</text>
<text x="1858" y="765" class="ax">4.4519</text>
<rect x="1854" y="632" width="4" height="1" fill="#fff"/>
<rect x="1854" y="670" width="4" height="1" fill="#fff"/>
<rect x="1854" y="709" width="4" height="1" fill="#fff"/>
<text x="1858" y="784.5" class="ax">1.73941</text>
<text x="1858" y="797" class="ax">0.8</text>
<text x="1858" y="805.5" class="ax">0.4</text>
<text x="1858" y="814.5" class="ax">0.00</text>
<text x="1858" y="822.5" class="ax">-0.4</text>
<text x="1858" y="831.5" class="ax">-0.8</text>
<text x="1858" y="849.5" class="ax">-1.9877</text>
<rect x="1854" y="772" width="4" height="1" fill="#fff"/>
<rect x="1854" y="793" width="4" height="1" fill="#fff"/>
<rect x="1854" y="801" width="4" height="1" fill="#fff"/>
<rect x="1854" y="809" width="4" height="1" fill="#fff"/>
<rect x="1854" y="817" width="4" height="1" fill="#fff"/>
<rect x="1854" y="826" width="4" height="1" fill="#fff"/>
<rect x="5" y="852" width="1" height="4" fill="#fff"/>
<text x="4" y="868" class="ax tl">28 Sep 2025</text>
<rect x="101" y="852" width="1" height="4" fill="#fff"/>
<text x="100" y="868" class="ax tl">29 Sep 10:00</text>
<rect x="197" y="852" width="1" height="4" fill="#fff"/>
<text x="196" y="868" class="ax tl">29 Sep 22:00</text>
<rect x="293" y="852" width="1" height="4" fill="#fff"/>
<text x="292" y="868" class="ax tl">30 Sep 10:00</text>
<rect x="389" y="852" width="1" height="4" fill="#fff"/>
<text x="388" y="868" class="ax tl">30 Sep 22:00</text>
<rect x="485" y="852" width="1" height="4" fill="#fff"/>
<text x="484" y="868" class="ax tl">1 Oct 10:00</text>
<rect x="581" y="852" width="1" height="4" fill="#fff"/>
<text x="580" y="868" class="ax tl">1 Oct 22:00</text>
<rect x="677" y="852" width="1" height="4" fill="#fff"/>
<text x="676" y="868" class="ax tl">2 Oct 10:00</text>
<rect x="773" y="852" width="1" height="4" fill="#fff"/>
<text x="772" y="868" class="ax tl">2 Oct 22:00</text>
<rect x="869" y="852" width="1" height="4" fill="#fff"/>
<text x="868" y="868" class="ax tl">3 Oct 10:00</text>
<rect x="965" y="852" width="1" height="4" fill="#fff"/>
<text x="964" y="868" class="ax tl">5 Oct 22:00</text>
<rect x="1061" y="852" width="1" height="4" fill="#fff"/>
<text x="1060" y="868" class="ax tl">6 Oct 10:00</text>
<rect x="1157" y="852" width="1" height="4" fill="#fff"/>
<text x="1156" y="868" class="ax tl">6 Oct 22:00</text>
<rect x="1253" y="852" width="1" height="4" fill="#fff"/>
<text x="1252" y="868" class="ax tl">7 Oct 10:00</text>
<rect x="1349" y="852" width="1" height="4" fill="#fff"/>
<text x="1348" y="868" class="ax tl">7 Oct 22:00</text>
<rect x="1445" y="852" width="1" height="4" fill="#fff"/>
<text x="1444" y="868" class="ax tl">8 Oct 10:00</text>
<text x="1847" y="713" text-anchor="end" style="font-size:20px;fill:#ff0000">Current = -0.66</text>
<text x="1848" y="738" text-anchor="end" style="font-size:23.5px;fill:#fff">-0.66</text>
<text x="1852" y="762" text-anchor="end" style="font-size:20px;fill:#ff0000">Sell Only</text>
</g>
</svg>
<div class="pbtn sel" style="top:55px"><span>EURUSD</span></div>
<div class="pbtn" style="top:77px"><span>USDCHF</span></div>
<div class="pbtn" style="top:99px"><span>EURJPY</span></div>
<div class="pbtn" style="top:121px"><span>GBPUSD</span></div>
<div class="pbtn" style="top:143px"><span>GBPJPY</span></div>
<div class="pbtn" style="top:165px"><span>USDJPY</span></div>
<div class="pbtn" style="top:187px"><span>AUDCAD</span></div>
<div class="pbtn" style="top:209px"><span>AUDCHF</span></div>
<div class="pbtn" style="top:231px"><span>CADCHF</span></div>
<div class="pbtn" style="top:253px"><span>EURGBP</span></div>
<div class="pbtn tf" style="top:295px"><span>M1</span></div>
<div class="pbtn tf" style="top:317px"><span>M2</span></div>
<div class="pbtn tf" style="top:339px"><span>M5</span></div>
<div class="pbtn tf" style="top:361px"><span>M15</span></div>
<div class="pbtn tf" style="top:383px"><span>M30</span></div>
<div class="pbtn tf sel" style="top:405px"><span>H1</span></div>
<div class="pbtn tf" style="top:427px"><span>H4</span></div>
<div class="pbtn tf" style="top:449px"><span>D1</span></div>
<div class="pbtn tf" style="top:471px"><span>W1</span></div>
<div class="pbtn tf" style="top:493px"><span>MN</span></div>
<div id="dlg">
 <div id="dlgtitle"></div>
 <div class="abs" style="left:10px;top:8px"><svg width="18" height="19" viewBox="0 0 48 50"><defs><linearGradient id="bgs" x1="0" x2="1"><stop offset="0" stop-color="#fff6b0"/><stop offset="0.45" stop-color="#f0d040"/><stop offset="1" stop-color="#d4a800"/></linearGradient></defs><path d="M24 2 C17 2 14 6 13 14 L10 32 C9 36 4 38 3 41 L45 41 C44 38 39 36 38 32 L35 14 C34 6 31 2 24 2Z" fill="url(#bgs)" stroke="#b08a10" stroke-width="2"/><ellipse cx="24" cy="45" rx="4" ry="4" fill="#e0b020" stroke="#b08a10" stroke-width="1.5"/></svg></div>
 <div class="abs" style="left:36px;top:10px;font-size:14px;color:#8a8a8a">Alert</div>
 <div class="abs" style="left:314px;top:7px;font-size:17px;color:#8a8a8a">?</div>
 <svg class="abs" style="left:369px;top:11px" width="14" height="14"><path d="M1 1 L13 13 M13 1 L1 13" stroke="#707070" stroke-width="1"/></svg>
 <svg class="abs" style="left:15px;top:51px" width="50" height="50" viewBox="0 0 48 50">
  <defs><linearGradient id="bgb" x1="0" x2="1"><stop offset="0" stop-color="#fff3a8"/><stop offset="0.35" stop-color="#f4d646"/><stop offset="1" stop-color="#d6a90c"/></linearGradient></defs>
  <ellipse cx="24" cy="44" rx="3.6" ry="3.4" fill="#e8bc20" stroke="#b8900c" stroke-width="1"/>
  <path d="M24 4 C18 4 14 6 12.5 14 L10 30 C9 35 4 37 2.5 41 C9 44.5 39 44.5 45.5 41 C44 37 39 35 38 30 L35.5 14 C34 6 30 4 24 4Z" fill="url(#bgb)" stroke="#b8900c" stroke-width="1.4"/>
  <ellipse cx="24" cy="4" rx="3.5" ry="2" fill="#d8a810" stroke="#b8900c" stroke-width="0.8"/>
  <path d="M8.5 35.5 C18 39 30 39 39.5 35.5" stroke="#c09a20" stroke-width="1.4" fill="none"/>
  <path d="M16 27 L26 10" stroke="#fffbe0" stroke-width="3" opacity="0.6"/>
 </svg>
 <div class="abs" style="left:81px;top:57px;font-size:12.5px;color:#000">NoRepaint Buy Alert - EURUSD[60m]</div>
 <div class="abs" style="left:376px;top:56px;width:1px;height:56px;background:#fbfbfb"></div>
 <svg class="abs" style="left:381px;top:61px" width="12" height="50"><path d="M1 8 L11 8 L6 2Z" fill="#9a9a9a"/><path d="M1 36 L11 36 L6 42Z" fill="#9a9a9a"/></svg>
 <div class="abs" style="left:9px;top:122px;width:389px;height:97px;background:#fff;border:1px solid #a0a0a0"></div>
 <div class="abs" style="left:11px;top:124px;width:385px;height:25px;background:#e8e8e8;border-bottom:1px solid #d0d0d0"></div>
 <div class="abs" style="left:104px;top:124px;width:1px;height:25px;background:#d0d0d0"></div>
 <div class="abs" style="left:15px;top:128px"><svg width="14" height="16" viewBox="0 0 48 50"><defs><linearGradient id="bgs2" x1="0" x2="1"><stop offset="0" stop-color="#fff6b0"/><stop offset="0.45" stop-color="#f0d040"/><stop offset="1" stop-color="#d4a800"/></linearGradient></defs><path d="M24 2 C17 2 14 6 13 14 L10 32 C9 36 4 38 3 41 L45 41 C44 38 39 36 38 32 L35 14 C34 6 31 2 24 2Z" fill="url(#bgs2)" stroke="#b08a10" stroke-width="2"/><ellipse cx="24" cy="45" rx="4" ry="4" fill="#e0b020" stroke="#b08a10" stroke-width="1.5"/></svg></div>
 <div class="abs" style="left:38px;top:129px;font-size:12.5px;color:#000">07:24:58</div>
 <div class="abs" style="left:112px;top:129px;font-size:12.5px;color:#000">NoRepaint Buy Alert - EURUSD[60m]</div>
 <div class="abs" style="left:160px;top:229px;width:85px;height:25px;background:#fdfdfd;border:1px solid #d0d0d0;border-radius:4px;font-size:13px;text-align:center;line-height:23px;color:#000">OK</div>
</div>
<div id="term"></div>
<svg class="abs" style="left:5px;top:884px" width="10" height="10"><path d="M1 1 L9 9 M9 1 L1 9" stroke="#000" stroke-width="1.6"/></svg>
<div class="abs" style="left:3px;top:900px;width:16px;height:90px;background:linear-gradient(#dce7f2,#b9c9dc)"></div>
<div class="abs" style="left:3px;top:989px;transform:rotate(-90deg);transform-origin:0 0;font-size:14.5px;color:#1c2440;width:90px;height:16px;line-height:16px;padding-left:2px">Terminal</div>
<div class="abs" style="left:20px;top:882px;width:1896px;height:107px;border-right:1px solid #fff;border-left:1px solid #fff"></div>
<div class="abs" style="left:20px;top:882px;width:1895px;height:81px;background:#fff;border-top:1px solid #a0a0a0;border-left:1px solid #a0a0a0"></div>
<div class="abs" style="left:1894px;top:883px;width:21px;height:79px;background:#f0f0f0"></div>
<div class="abs" style="left:1893px;top:883px;width:1px;height:26px;background:#e0e0e0"></div>
<div class="abs" style="left:1902px;top:920px;width:4px;height:21px;background:#8a8a8a;border-radius:2px"></div>
<div class="abs" style="left:220px;top:883px;width:1px;height:25px;background:#e8e8e8"></div>
<div class="abs" style="left:28px;top:888px;font-size:14.5px;color:#000">Time</div>
<div class="abs" style="left:227px;top:888px;font-size:14.5px;color:#000">Message</div>
<div class="abs" style="left:220px;top:908px;width:1px;height:50px;background:#e0e0e0"></div>
<div class="abs" style="left:21px;top:933px;width:1872px;height:26px;background:#ebebeb;border-top:1px solid #d8d8d8;border-bottom:1px solid #c8c8c8"></div>
<div class="abs" style="left:220px;top:933px;width:1px;height:25px;background:#d0d0d0"></div>
<div class="abs" style="left:28px;top:916px;width:9px;height:9px;border-radius:50%;background:radial-gradient(circle at 40% 40%,#d0d0d0,#858585);border:1px solid #9a9a9a"></div>
<div class="abs" style="left:28px;top:941px;width:9px;height:9px;border-radius:50%;background:radial-gradient(circle at 40% 40%,#d0d0d0,#858585);border:1px solid #9a9a9a"></div>
<div class="abs lt" style="left:48px;top:913px;font-size:14.5px;color:#000;letter-spacing:-0.3px">2025.10.08 07:24:57.461</div>
<div class="abs" style="left:226px;top:913px;font-size:14.5px;color:#000">Custom indicator Pairs Changer EURUSD,H1: loaded successfully</div>
<div class="abs lt" style="left:48px;top:938px;font-size:14.5px;color:#000;letter-spacing:-0.3px">2025.10.08 07:24:57.461</div>
<div class="abs" style="left:226px;top:938px;font-size:14.5px;color:#000">Custom indicator NoRepaint_Alerts EURUSD,H1: loaded successfully</div>
<div class="abs" style="left:21px;top:962px;width:1893px;height:2px;background:#000"></div>
<div class="abs" style="left:778px;top:962px;width:73px;height:25px;background:#fff;border:2px solid #000;border-top:none"></div>
<div class="abs" style="left:20px;top:989px;width:1896px;height:1px;background:#fff"></div>
<div class="abs" style="left:0px;top:994px;width:1920px;height:1px;background:#c8c8c8"></div>
<div class="tab" style="left:36px">Trade</div>
<div class="tab" style="left:99px">Exposure</div>
<div class="tab" style="left:184px">Account History</div>
<div class="tab" style="left:314px">News</div>
<div class="tab" style="left:375px">Alerts</div>
<div class="tab" style="left:438px">Mailbox<span class="badge">6</span></div>
<div class="tab" style="left:527px">Market<span class="badge">122</span></div>
<div class="tab" style="left:622px">Articles</div>
<div class="tab" style="left:696px">Code Base</div>
<div class="tab act" style="left:791px">Experts</div>
<div class="tab" style="left:864px">Journal</div>
<div class="tsep" style="left:87px"></div>
<div class="tsep" style="left:171px"></div>
<div class="tsep" style="left:301px"></div>
<div class="tsep" style="left:362px"></div>
<div class="tsep" style="left:425px"></div>
<div class="tsep" style="left:514px"></div>
<div class="tsep" style="left:609px"></div>
<div class="tsep" style="left:683px"></div>
<div class="tsep" style="left:923px"></div>
</body></html>
